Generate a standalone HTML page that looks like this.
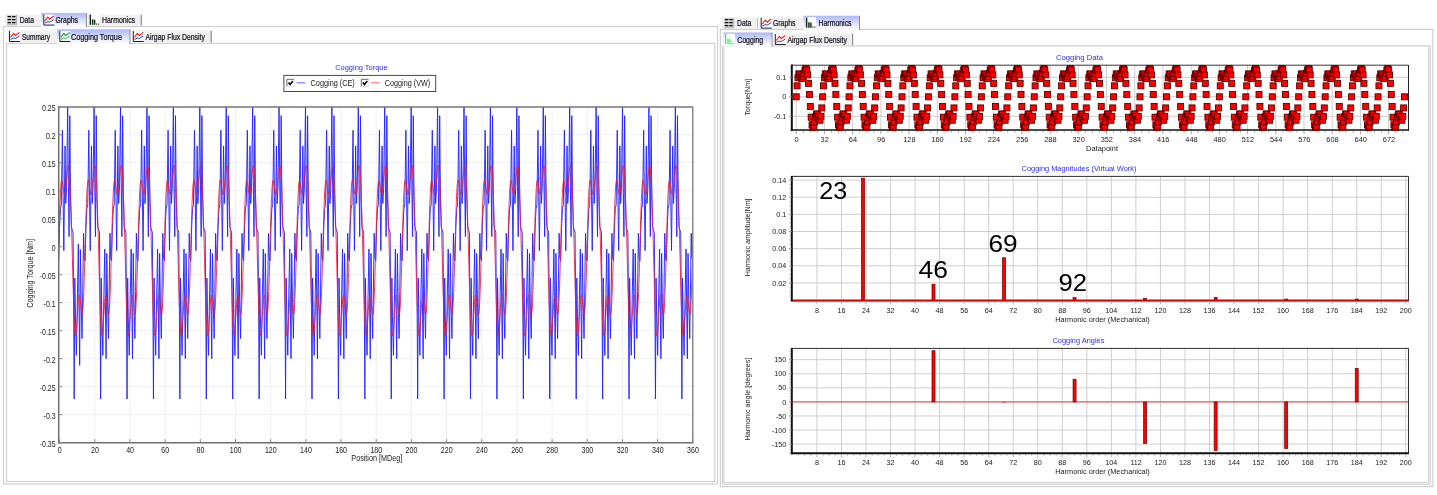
<!DOCTYPE html>
<html><head><meta charset="utf-8"><title>Cogging Torque</title>
<style>html,body{margin:0;padding:0;background:#fff;overflow:hidden}svg{display:block;filter:blur(0.3px)}text{font-family:'Liberation Sans',sans-serif}</style></head><body>
<svg width="1437" height="495" viewBox="0 0 1437 495">
<defs><linearGradient id="selg" x1="0" y1="0" x2="0" y2="1"><stop offset="0" stop-color="#aab6fb"/><stop offset="0.55" stop-color="#dfe3fd"/><stop offset="1" stop-color="#ffffff"/></linearGradient></defs>
<rect x="0" y="0" width="1437" height="495" fill="#ffffff" stroke="none" stroke-width="1"/>
<rect x="3.5" y="26.5" width="714" height="457.5" fill="none" stroke="#cfcfcf" stroke-width="1.2"/>
<rect x="6.5" y="43.3" width="708.2" height="438.2" fill="none" stroke="#cfcfcf" stroke-width="1.2"/>
<rect x="4" y="14.3" width="37.3" height="11.3" fill="#f0f0f0" stroke="none" stroke-width="1"/>
<line x1="4.4" y1="14.3" x2="4.4" y2="25.6" stroke="#fbfbfb" stroke-width="1"/>
<line x1="4" y1="14.700000000000001" x2="41.3" y2="14.700000000000001" stroke="#f8f8f8" stroke-width="1"/>
<rect x="7" y="14.8" width="9.5" height="10" fill="#e4e4e4" stroke="none" stroke-width="1"/>
<path d="M16.5 14.8 V24.8 H7" fill="none" stroke="#b0b0b0" stroke-width="1"/>
<line x1="7.5" y1="16.6" x2="11.2" y2="16.6" stroke="#101010" stroke-width="1.4"/>
<line x1="12.0" y1="16.6" x2="15.6" y2="16.6" stroke="#101010" stroke-width="1.4"/>
<line x1="7.5" y1="19.6" x2="11.2" y2="19.6" stroke="#101010" stroke-width="1.4"/>
<line x1="12.0" y1="19.6" x2="15.6" y2="19.6" stroke="#101010" stroke-width="1.4"/>
<line x1="7.5" y1="22.6" x2="11.2" y2="22.6" stroke="#101010" stroke-width="1.4"/>
<line x1="12.0" y1="22.6" x2="15.6" y2="22.6" stroke="#101010" stroke-width="1.4"/>
<text transform="translate(19.7 23.2) scale(0.8060 1)" font-size="8.4" fill="#101018" stroke="#101018" stroke-width="0.22">Data</text>
<rect x="41.3" y="13" width="45.400000000000006" height="14.2" fill="url(#selg)" stroke="none" stroke-width="1"/>
<line x1="86.4" y1="13" x2="86.4" y2="27.2" stroke="#8c8c8c" stroke-width="1"/>
<line x1="41.3" y1="13.2" x2="86.7" y2="13.2" stroke="#c4c8e8" stroke-width="0.6"/>
<rect x="43.3" y="14.6" width="11" height="11" fill="#ffffff" stroke="none" stroke-width="1"/>
<path d="M43.8 14.6 V25.1 H54.3" fill="none" stroke="#202020" stroke-width="1"/>
<polyline points="44.8,21.1 47.8,17.1 49.8,19.1 53.8,16.1" fill="none" stroke="#ff2020" stroke-width="1.2"/>
<polyline points="44.8,23.1 47.8,21.6 49.8,22.1 53.8,19.6" fill="none" stroke="#3040c0" stroke-width="1"/>
<text transform="translate(55.5 23.2) scale(0.8169 1)" font-size="8.4" fill="#101018" stroke="#101018" stroke-width="0.22">Graphs</text>
<rect x="87.3" y="14.3" width="54.39999999999999" height="11.3" fill="#f0f0f0" stroke="none" stroke-width="1"/>
<line x1="87.7" y1="14.3" x2="87.7" y2="25.6" stroke="#fbfbfb" stroke-width="1"/>
<line x1="87.3" y1="14.700000000000001" x2="141.7" y2="14.700000000000001" stroke="#f8f8f8" stroke-width="1"/>
<line x1="141.29999999999998" y1="14.8" x2="141.29999999999998" y2="25.6" stroke="#8c8c8c" stroke-width="1.2"/>
<rect x="89" y="14.3" width="10.5" height="11" fill="#ffffff" stroke="none" stroke-width="1"/>
<line x1="90.3" y1="14.600000000000001" x2="90.3" y2="24.8" stroke="#143014" stroke-width="1.5"/>
<line x1="92.6" y1="19.3" x2="92.6" y2="24.8" stroke="#143014" stroke-width="1.5"/>
<line x1="94.6" y1="19.700000000000003" x2="94.6" y2="24.8" stroke="#143014" stroke-width="1.5"/>
<line x1="96.6" y1="23.5" x2="96.6" y2="24.8" stroke="#143014" stroke-width="1.0"/>
<line x1="98.5" y1="23.5" x2="98.5" y2="24.8" stroke="#143014" stroke-width="1.0"/>
<text transform="translate(102 23.0) scale(0.8246 1)" font-size="8.4" fill="#101018" stroke="#101018" stroke-width="0.22">Harmonics</text>
<rect x="6.8" y="30.3" width="50.400000000000006" height="12.3" fill="#f0f0f0" stroke="none" stroke-width="1"/>
<line x1="7.2" y1="30.3" x2="7.2" y2="42.6" stroke="#fbfbfb" stroke-width="1"/>
<line x1="6.8" y1="30.7" x2="57.2" y2="30.7" stroke="#f8f8f8" stroke-width="1"/>
<rect x="9" y="31" width="11" height="11" fill="#ffffff" stroke="none" stroke-width="1"/>
<path d="M9.5 31 V41.5 H20" fill="none" stroke="#202020" stroke-width="1"/>
<polyline points="10.5,37.5 13.5,33.5 15.5,35.5 19.5,32.5" fill="none" stroke="#ff2020" stroke-width="1.2"/>
<polyline points="10.5,39.5 13.5,38 15.5,38.5 19.5,36" fill="none" stroke="#3040c0" stroke-width="1"/>
<text transform="translate(22 39.6) scale(0.7792 1)" font-size="8.4" fill="#101018" stroke="#101018" stroke-width="0.22">Summary</text>
<rect x="57.2" y="29.4" width="73.10000000000001" height="14.600000000000001" fill="url(#selg)" stroke="none" stroke-width="1"/>
<line x1="130.0" y1="29.4" x2="130.0" y2="44" stroke="#8c8c8c" stroke-width="1"/>
<line x1="57.2" y1="29.599999999999998" x2="130.3" y2="29.599999999999998" stroke="#c4c8e8" stroke-width="0.6"/>
<rect x="59.3" y="31" width="11" height="11" fill="#ffffff" stroke="none" stroke-width="1"/>
<path d="M59.8 31 V41.5 H70.3" fill="none" stroke="#202020" stroke-width="1"/>
<polyline points="60.8,37.5 63.8,33.5 65.8,35.5 69.8,32.5" fill="none" stroke="#18b038" stroke-width="1.2"/>
<polyline points="60.8,39.5 63.8,38 65.8,38.5 69.8,36" fill="none" stroke="#30b050" stroke-width="1"/>
<text transform="translate(71 39.6) scale(0.8622 1)" font-size="8.4" fill="#101018" stroke="#101018" stroke-width="0.22">Cogging Torque</text>
<rect x="131" y="30.3" width="80.6" height="12.3" fill="#f0f0f0" stroke="none" stroke-width="1"/>
<line x1="131.4" y1="30.3" x2="131.4" y2="42.6" stroke="#fbfbfb" stroke-width="1"/>
<line x1="131" y1="30.7" x2="211.6" y2="30.7" stroke="#f8f8f8" stroke-width="1"/>
<line x1="211.2" y1="30.8" x2="211.2" y2="42.6" stroke="#8c8c8c" stroke-width="1.2"/>
<rect x="132.8" y="31" width="11" height="11" fill="#ffffff" stroke="none" stroke-width="1"/>
<path d="M133.3 31 V41.5 H143.8" fill="none" stroke="#202020" stroke-width="1"/>
<polyline points="134.3,37.5 137.3,33.5 139.3,35.5 143.3,32.5" fill="none" stroke="#ff2020" stroke-width="1.2"/>
<polyline points="134.3,39.5 137.3,38 139.3,38.5 143.3,36" fill="none" stroke="#3040c0" stroke-width="1"/>
<text transform="translate(145.5 39.6) scale(0.8170 1)" font-size="8.4" fill="#101018" stroke="#101018" stroke-width="0.22">Airgap Flux Density</text>
<line x1="94.78" y1="106.7" x2="94.78" y2="442.7" stroke="#f0f0f0" stroke-width="1"/>
<line x1="129.96" y1="106.7" x2="129.96" y2="442.7" stroke="#f0f0f0" stroke-width="1"/>
<line x1="165.14" y1="106.7" x2="165.14" y2="442.7" stroke="#f0f0f0" stroke-width="1"/>
<line x1="200.32" y1="106.7" x2="200.32" y2="442.7" stroke="#f0f0f0" stroke-width="1"/>
<line x1="235.5" y1="106.7" x2="235.5" y2="442.7" stroke="#f0f0f0" stroke-width="1"/>
<line x1="270.68" y1="106.7" x2="270.68" y2="442.7" stroke="#f0f0f0" stroke-width="1"/>
<line x1="305.86" y1="106.7" x2="305.86" y2="442.7" stroke="#f0f0f0" stroke-width="1"/>
<line x1="341.04" y1="106.7" x2="341.04" y2="442.7" stroke="#f0f0f0" stroke-width="1"/>
<line x1="376.22" y1="106.7" x2="376.22" y2="442.7" stroke="#f0f0f0" stroke-width="1"/>
<line x1="411.4" y1="106.7" x2="411.4" y2="442.7" stroke="#f0f0f0" stroke-width="1"/>
<line x1="446.58" y1="106.7" x2="446.58" y2="442.7" stroke="#f0f0f0" stroke-width="1"/>
<line x1="481.76" y1="106.7" x2="481.76" y2="442.7" stroke="#f0f0f0" stroke-width="1"/>
<line x1="516.94" y1="106.7" x2="516.94" y2="442.7" stroke="#f0f0f0" stroke-width="1"/>
<line x1="552.12" y1="106.7" x2="552.12" y2="442.7" stroke="#f0f0f0" stroke-width="1"/>
<line x1="587.3" y1="106.7" x2="587.3" y2="442.7" stroke="#f0f0f0" stroke-width="1"/>
<line x1="622.48" y1="106.7" x2="622.48" y2="442.7" stroke="#f0f0f0" stroke-width="1"/>
<line x1="657.66" y1="106.7" x2="657.66" y2="442.7" stroke="#f0f0f0" stroke-width="1"/>
<line x1="58.7" y1="414.7" x2="692.8" y2="414.7" stroke="#f0f0f0" stroke-width="1"/>
<line x1="58.7" y1="386.7" x2="692.8" y2="386.7" stroke="#f0f0f0" stroke-width="1"/>
<line x1="58.7" y1="358.7" x2="692.8" y2="358.7" stroke="#f0f0f0" stroke-width="1"/>
<line x1="58.7" y1="330.7" x2="692.8" y2="330.7" stroke="#f0f0f0" stroke-width="1"/>
<line x1="58.7" y1="302.7" x2="692.8" y2="302.7" stroke="#f0f0f0" stroke-width="1"/>
<line x1="58.7" y1="274.7" x2="692.8" y2="274.7" stroke="#f0f0f0" stroke-width="1"/>
<line x1="58.7" y1="246.7" x2="692.8" y2="246.7" stroke="#f0f0f0" stroke-width="1"/>
<line x1="58.7" y1="218.7" x2="692.8" y2="218.7" stroke="#f0f0f0" stroke-width="1"/>
<line x1="58.7" y1="190.7" x2="692.8" y2="190.7" stroke="#f0f0f0" stroke-width="1"/>
<line x1="58.7" y1="162.7" x2="692.8" y2="162.7" stroke="#f0f0f0" stroke-width="1"/>
<line x1="58.7" y1="134.7" x2="692.8" y2="134.7" stroke="#f0f0f0" stroke-width="1"/>
<g clip-path="url(#lclip)">
<clipPath id="lclip"><rect x="58.7" y="106.7" width="634.0999999999999" height="336.0"/></clipPath>
<polyline fill="none" stroke="#2222ff" stroke-width="0.92" stroke-linejoin="miter" points="58.70,260.70 59.58,227.10 60.46,208.62 61.34,204.70 62.40,130.22 63.10,196.30 63.81,250.62 65.04,145.90 65.75,203.58 66.63,187.90 67.68,106.70 68.39,185.10 69.09,236.62 69.80,115.66 70.59,199.10 71.29,226.54 72.17,229.90 73.06,232.14 73.67,308.30 74.20,399.02 74.82,278.06 75.43,316.70 76.40,355.34 77.19,308.30 78.34,243.90 78.96,302.70 79.66,365.42 80.37,249.50 81.16,302.70 82.04,338.54 82.74,291.50 83.54,233.26 84.24,257.90 85.12,260.70 86.00,227.10 86.88,208.62 87.76,204.70 88.82,130.22 89.52,196.30 90.23,250.62 91.46,145.90 92.17,203.58 93.05,187.90 94.10,106.70 94.81,185.10 95.51,236.62 96.22,115.66 97.01,199.10 97.71,226.54 98.60,229.90 99.48,232.14 100.09,308.30 100.62,399.02 101.24,278.06 101.85,316.70 102.82,355.34 103.62,308.30 104.76,248.94 105.38,302.70 106.08,358.70 106.79,253.42 107.58,302.70 108.46,338.54 109.16,291.50 109.96,233.26 110.66,257.90 111.54,260.70 112.42,227.10 113.30,208.62 114.18,204.70 115.24,130.22 115.95,196.30 116.65,250.62 117.88,145.90 118.59,203.58 119.47,187.90 120.52,106.70 121.23,185.10 121.93,236.62 122.64,115.66 123.43,199.10 124.14,226.54 125.02,229.90 125.90,232.14 126.51,308.30 127.04,399.02 127.66,278.06 128.27,316.70 129.24,355.34 130.04,308.30 131.18,248.94 131.80,302.70 132.50,358.70 133.21,253.42 134.00,302.70 134.88,338.54 135.58,291.50 136.38,233.26 137.08,257.90 137.96,260.70 138.84,227.10 139.72,208.62 140.60,204.70 141.66,130.22 142.37,196.30 143.07,250.62 144.30,145.90 145.01,203.58 145.89,187.90 146.95,106.70 147.65,185.10 148.35,236.62 149.06,115.66 149.85,199.10 150.56,226.54 151.44,229.90 152.32,232.14 152.93,308.30 153.46,399.02 154.08,278.06 154.70,316.70 155.66,355.34 156.46,308.30 157.60,248.94 158.22,302.70 158.92,358.70 159.63,253.42 160.42,302.70 161.30,338.54 162.01,291.50 162.80,233.26 163.50,257.90 164.38,260.70 165.26,227.10 166.14,208.62 167.03,204.70 168.08,130.22 168.79,196.30 169.49,250.62 170.72,145.90 171.43,203.58 172.31,187.90 173.37,106.70 174.07,185.10 174.78,236.62 175.48,115.66 176.27,199.10 176.98,226.54 177.86,229.90 178.74,232.14 179.36,308.30 179.88,399.02 180.50,278.06 181.12,316.70 182.09,355.34 182.88,308.30 184.02,248.94 184.64,302.70 185.34,358.70 186.05,253.42 186.84,302.70 187.72,338.54 188.43,291.50 189.22,233.26 189.92,257.90 190.80,260.70 191.68,227.10 192.57,208.62 193.45,204.70 194.50,130.22 195.21,196.30 195.91,250.62 197.15,145.90 197.85,203.58 198.73,187.90 199.79,106.70 200.49,185.10 201.20,236.62 201.90,115.66 202.69,199.10 203.40,226.54 204.28,229.90 205.16,232.14 205.78,308.30 206.30,399.02 206.92,278.06 207.54,316.70 208.51,355.34 209.30,308.30 210.44,248.94 211.06,302.70 211.76,358.70 212.47,253.42 213.26,302.70 214.14,338.54 214.85,291.50 215.64,233.26 216.34,257.90 217.22,260.70 218.11,227.10 218.99,208.62 219.87,204.70 220.92,130.22 221.63,196.30 222.33,250.62 223.57,145.90 224.27,203.58 225.15,187.90 226.21,106.70 226.91,185.10 227.62,236.62 228.32,115.66 229.11,199.10 229.82,226.54 230.70,229.90 231.58,232.14 232.20,308.30 232.73,399.02 233.34,278.06 233.96,316.70 234.93,355.34 235.72,308.30 236.86,248.94 237.48,302.70 238.19,358.70 238.89,253.42 239.68,302.70 240.56,338.54 241.27,291.50 242.06,233.26 242.77,257.90 243.65,260.70 244.53,227.10 245.41,208.62 246.29,204.70 247.34,130.22 248.05,196.30 248.75,250.62 249.99,145.90 250.69,203.58 251.57,187.90 252.63,106.70 253.33,185.10 254.04,236.62 254.74,115.66 255.54,199.10 256.24,226.54 257.12,229.90 258.00,232.14 258.62,308.30 259.15,399.02 259.76,278.06 260.38,316.70 261.35,355.34 262.14,308.30 263.29,248.94 263.90,302.70 264.61,358.70 265.31,253.42 266.10,302.70 266.98,338.54 267.69,291.50 268.48,233.26 269.19,257.90 270.07,260.70 270.95,227.10 271.83,208.62 272.71,204.70 273.77,130.22 274.47,196.30 275.17,250.62 276.41,145.90 277.11,203.58 277.99,187.90 279.05,106.70 279.75,185.10 280.46,236.62 281.16,115.66 281.96,199.10 282.66,226.54 283.54,229.90 284.42,232.14 285.04,308.30 285.57,399.02 286.18,278.06 286.80,316.70 287.77,355.34 288.56,308.30 289.71,248.94 290.32,302.70 291.03,358.70 291.73,253.42 292.52,302.70 293.41,338.54 294.11,291.50 294.90,233.26 295.61,257.90 296.49,260.70 297.37,227.10 298.25,208.62 299.13,204.70 300.19,130.22 300.89,196.30 301.60,250.62 302.83,145.90 303.53,203.58 304.41,187.90 305.47,106.70 306.18,185.10 306.88,236.62 307.58,115.66 308.38,199.10 309.08,226.54 309.96,229.90 310.84,232.14 311.46,308.30 311.99,399.02 312.60,278.06 313.22,316.70 314.19,355.34 314.98,308.30 316.13,248.94 316.74,302.70 317.45,358.70 318.15,253.42 318.95,302.70 319.83,338.54 320.53,291.50 321.32,233.26 322.03,257.90 322.91,260.70 323.79,227.10 324.67,208.62 325.55,204.70 326.61,130.22 327.31,196.30 328.02,250.62 329.25,145.90 329.95,203.58 330.83,187.90 331.89,106.70 332.60,185.10 333.30,236.62 334.01,115.66 334.80,199.10 335.50,226.54 336.38,229.90 337.26,232.14 337.88,308.30 338.41,399.02 339.03,278.06 339.64,316.70 340.61,355.34 341.40,308.30 342.55,248.94 343.16,302.70 343.87,358.70 344.57,253.42 345.37,302.70 346.25,338.54 346.95,291.50 347.74,233.26 348.45,257.90 349.33,260.70 350.21,227.10 351.09,208.62 351.97,204.70 353.03,130.22 353.73,196.30 354.44,250.62 355.67,145.90 356.37,203.58 357.26,187.90 358.31,106.70 359.02,185.10 359.72,236.62 360.43,115.66 361.22,199.10 361.92,226.54 362.80,229.90 363.68,232.14 364.30,308.30 364.83,399.02 365.45,278.06 366.06,316.70 367.03,355.34 367.82,308.30 368.97,248.94 369.59,302.70 370.29,358.70 370.99,253.42 371.79,302.70 372.67,338.54 373.37,291.50 374.16,233.26 374.87,257.90 375.75,260.70 376.63,227.10 377.51,208.62 378.39,204.70 379.45,130.22 380.15,196.30 380.86,250.62 382.09,145.90 382.80,203.58 383.68,187.90 384.73,106.70 385.44,185.10 386.14,236.62 386.85,115.66 387.64,199.10 388.34,226.54 389.22,229.90 390.11,232.14 390.72,308.30 391.25,399.02 391.87,278.06 392.48,316.70 393.45,355.34 394.24,308.30 395.39,248.94 396.01,302.70 396.71,358.70 397.42,253.42 398.21,302.70 399.09,338.54 399.79,291.50 400.59,233.26 401.29,257.90 402.17,260.70 403.05,227.10 403.93,208.62 404.81,204.70 405.87,130.22 406.57,196.30 407.28,250.62 408.51,145.90 409.22,203.58 410.10,187.90 411.15,106.70 411.86,185.10 412.56,236.62 413.27,115.66 414.06,199.10 414.76,226.54 415.65,229.90 416.53,232.14 417.14,308.30 417.67,399.02 418.29,278.06 418.90,316.70 419.87,355.34 420.67,308.30 421.81,248.94 422.43,302.70 423.13,358.70 423.84,253.42 424.63,302.70 425.51,338.54 426.21,291.50 427.01,233.26 427.71,257.90 428.59,260.70 429.47,227.10 430.35,208.62 431.23,204.70 432.29,130.22 433.00,196.30 433.70,250.62 434.93,145.90 435.64,203.58 436.52,187.90 437.57,106.70 438.28,185.10 438.98,236.62 439.69,115.66 440.48,199.10 441.19,226.54 442.07,229.90 442.95,232.14 443.56,308.30 444.09,399.02 444.71,278.06 445.32,316.70 446.29,355.34 447.09,308.30 448.23,248.94 448.85,302.70 449.55,358.70 450.26,253.42 451.05,302.70 451.93,338.54 452.63,291.50 453.43,233.26 454.13,257.90 455.01,260.70 455.89,227.10 456.77,208.62 457.65,204.70 458.71,130.22 459.42,196.30 460.12,250.62 461.35,145.90 462.06,203.58 462.94,187.90 464.00,106.70 464.70,185.10 465.40,236.62 466.11,115.66 466.90,199.10 467.61,226.54 468.49,229.90 469.37,232.14 469.98,308.30 470.51,399.02 471.13,278.06 471.75,316.70 472.71,355.34 473.51,308.30 474.65,248.94 475.27,302.70 475.97,358.70 476.68,253.42 477.47,302.70 478.35,338.54 479.06,291.50 479.85,233.26 480.55,257.90 481.43,260.70 482.31,227.10 483.19,208.62 484.08,204.70 485.13,130.22 485.84,196.30 486.54,250.62 487.77,145.90 488.48,203.58 489.36,187.90 490.42,106.70 491.12,185.10 491.83,236.62 492.53,115.66 493.32,199.10 494.03,226.54 494.91,229.90 495.79,232.14 496.41,308.30 496.93,399.02 497.55,278.06 498.17,316.70 499.14,355.34 499.93,308.30 501.07,248.94 501.69,302.70 502.39,358.70 503.10,253.42 503.89,302.70 504.77,338.54 505.48,291.50 506.27,233.26 506.97,257.90 507.85,260.70 508.73,227.10 509.62,208.62 510.50,204.70 511.55,130.22 512.26,196.30 512.96,250.62 514.20,145.90 514.90,203.58 515.78,187.90 516.84,106.70 517.54,185.10 518.25,236.62 518.95,115.66 519.74,199.10 520.45,226.54 521.33,229.90 522.21,232.14 522.83,308.30 523.35,399.02 523.97,278.06 524.59,316.70 525.56,355.34 526.35,308.30 527.49,248.94 528.11,302.70 528.81,358.70 529.52,253.42 530.31,302.70 531.19,338.54 531.90,291.50 532.69,233.26 533.39,257.90 534.27,260.70 535.16,227.10 536.04,208.62 536.92,204.70 537.97,130.22 538.68,196.30 539.38,250.62 540.62,145.90 541.32,203.58 542.20,187.90 543.26,106.70 543.96,185.10 544.67,236.62 545.37,115.66 546.16,199.10 546.87,226.54 547.75,229.90 548.63,232.14 549.25,308.30 549.78,399.02 550.39,278.06 551.01,316.70 551.98,355.34 552.77,308.30 553.91,248.94 554.53,302.70 555.24,358.70 555.94,253.42 556.73,302.70 557.61,338.54 558.32,291.50 559.11,233.26 559.82,257.90 560.70,260.70 561.58,227.10 562.46,208.62 563.34,204.70 564.39,130.22 565.10,196.30 565.80,250.62 567.04,145.90 567.74,203.58 568.62,187.90 569.68,106.70 570.38,185.10 571.09,236.62 571.79,115.66 572.59,199.10 573.29,226.54 574.17,229.90 575.05,232.14 575.67,308.30 576.20,399.02 576.81,278.06 577.43,316.70 578.40,355.34 579.19,308.30 580.34,248.94 580.95,302.70 581.66,358.70 582.36,253.42 583.15,302.70 584.03,338.54 584.74,291.50 585.53,233.26 586.24,257.90 587.12,260.70 588.00,227.10 588.88,208.62 589.76,204.70 590.82,130.22 591.52,196.30 592.22,250.62 593.46,145.90 594.16,203.58 595.04,187.90 596.10,106.70 596.80,185.10 597.51,236.62 598.21,115.66 599.01,199.10 599.71,226.54 600.59,229.90 601.47,232.14 602.09,308.30 602.62,399.02 603.23,278.06 603.85,316.70 604.82,355.34 605.61,308.30 606.76,248.94 607.37,302.70 608.08,358.70 608.78,253.42 609.57,302.70 610.46,338.54 611.16,291.50 611.95,233.26 612.66,257.90 613.54,260.70 614.42,227.10 615.30,208.62 616.18,204.70 617.24,130.22 617.94,196.30 618.65,250.62 619.88,145.90 620.58,203.58 621.46,187.90 622.52,106.70 623.23,185.10 623.93,236.62 624.63,115.66 625.43,199.10 626.13,226.54 627.01,229.90 627.89,232.14 628.51,308.30 629.04,399.02 629.65,278.06 630.27,316.70 631.24,355.34 632.03,308.30 633.18,248.94 633.79,302.70 634.50,358.70 635.20,253.42 636.00,302.70 636.88,338.54 637.58,291.50 638.37,233.26 639.08,257.90 639.96,260.70 640.84,227.10 641.72,208.62 642.60,204.70 643.66,130.22 644.36,196.30 645.07,250.62 646.30,145.90 647.00,203.58 647.88,187.90 648.94,106.70 649.65,185.10 650.35,236.62 651.06,115.66 651.85,199.10 652.55,226.54 653.43,229.90 654.31,232.14 654.93,308.30 655.46,399.02 656.08,278.06 656.69,316.70 657.66,355.34 658.45,308.30 659.60,248.94 660.21,302.70 660.92,358.70 661.62,253.42 662.42,302.70 663.30,338.54 664.00,291.50 664.79,233.26 665.50,257.90 666.38,260.70 667.26,227.10 668.14,208.62 669.02,204.70 670.08,130.22 670.78,196.30 671.49,250.62 672.72,145.90 673.42,203.58 674.31,187.90 675.36,106.70 676.07,185.10 676.77,236.62 677.48,115.66 678.27,199.10 678.97,226.54 679.85,229.90 680.73,232.14 681.35,308.30 681.88,399.02 682.50,278.06 683.11,316.70 684.08,355.34 684.87,308.30 686.02,248.94 686.64,302.70 687.34,358.70 688.04,253.42 688.84,302.70 689.72,338.54 690.42,291.50 691.21,233.26 691.92,257.90 692.80,260.70"/>
<polyline fill="none" stroke="#f01c38" stroke-width="0.85" stroke-linejoin="round" points="58.70,246.70 59.14,230.38 59.58,215.26 60.02,202.28 60.46,192.10 60.90,185.06 61.34,181.17 61.78,180.12 62.22,181.33 62.66,184.05 63.10,187.45 63.54,190.75 63.98,193.24 64.42,194.43 64.86,194.04 65.31,192.04 65.75,188.62 66.19,184.13 66.63,179.10 67.07,174.11 67.51,169.77 67.95,166.65 68.39,165.28 68.83,166.07 69.27,169.31 69.71,175.17 70.15,183.69 70.59,194.74 71.03,208.08 71.47,223.30 71.91,239.87 72.35,257.12 72.79,274.30 73.23,290.63 73.67,305.31 74.11,317.63 74.55,326.99 74.99,333.03 75.43,335.62 75.87,334.92 76.31,331.36 76.75,325.63 77.19,318.61 77.63,311.25 78.08,304.52 78.52,299.23 78.96,295.98 79.40,295.06 79.84,296.42 80.28,299.65 80.72,304.04 81.16,308.67 81.60,312.50 82.04,314.53 82.48,313.91 82.92,310.06 83.36,302.74 83.80,292.10 84.24,278.63 84.68,263.16 85.12,246.70 85.56,230.38 86.00,215.26 86.44,202.28 86.88,192.10 87.32,185.06 87.76,181.17 88.20,180.12 88.64,181.33 89.08,184.05 89.52,187.45 89.96,190.75 90.41,193.24 90.85,194.43 91.29,194.04 91.73,192.04 92.17,188.62 92.61,184.13 93.05,179.10 93.49,174.11 93.93,169.77 94.37,166.65 94.81,165.28 95.25,166.07 95.69,169.31 96.13,175.17 96.57,183.69 97.01,194.74 97.45,208.08 97.89,223.30 98.33,239.87 98.77,257.12 99.21,274.30 99.65,290.63 100.09,305.31 100.53,317.63 100.97,326.99 101.41,333.03 101.85,335.62 102.29,334.92 102.73,331.36 103.18,325.63 103.62,318.61 104.06,311.25 104.50,304.52 104.94,299.23 105.38,295.98 105.82,295.06 106.26,296.42 106.70,299.65 107.14,304.04 107.58,308.67 108.02,312.50 108.46,314.53 108.90,313.91 109.34,310.06 109.78,302.74 110.22,292.10 110.66,278.63 111.10,263.16 111.54,246.70 111.98,230.38 112.42,215.26 112.86,202.28 113.30,192.10 113.74,185.06 114.18,181.17 114.62,180.12 115.06,181.33 115.50,184.05 115.95,187.45 116.39,190.75 116.83,193.24 117.27,194.43 117.71,194.04 118.15,192.04 118.59,188.62 119.03,184.13 119.47,179.10 119.91,174.11 120.35,169.77 120.79,166.65 121.23,165.28 121.67,166.07 122.11,169.31 122.55,175.17 122.99,183.69 123.43,194.74 123.87,208.08 124.31,223.30 124.75,239.87 125.19,257.12 125.63,274.30 126.07,290.63 126.51,305.31 126.95,317.63 127.39,326.99 127.83,333.03 128.27,335.62 128.72,334.92 129.16,331.36 129.60,325.63 130.04,318.61 130.48,311.25 130.92,304.52 131.36,299.23 131.80,295.98 132.24,295.06 132.68,296.42 133.12,299.65 133.56,304.04 134.00,308.67 134.44,312.50 134.88,314.53 135.32,313.91 135.76,310.06 136.20,302.74 136.64,292.10 137.08,278.63 137.52,263.16 137.96,246.70 138.40,230.38 138.84,215.26 139.28,202.28 139.72,192.10 140.16,185.06 140.60,181.17 141.04,180.12 141.49,181.33 141.93,184.05 142.37,187.45 142.81,190.75 143.25,193.24 143.69,194.43 144.13,194.04 144.57,192.04 145.01,188.62 145.45,184.13 145.89,179.10 146.33,174.11 146.77,169.77 147.21,166.65 147.65,165.28 148.09,166.07 148.53,169.31 148.97,175.17 149.41,183.69 149.85,194.74 150.29,208.08 150.73,223.30 151.17,239.87 151.61,257.12 152.05,274.30 152.49,290.63 152.93,305.31 153.37,317.63 153.81,326.99 154.26,333.03 154.70,335.62 155.14,334.92 155.58,331.36 156.02,325.63 156.46,318.61 156.90,311.25 157.34,304.52 157.78,299.23 158.22,295.98 158.66,295.06 159.10,296.42 159.54,299.65 159.98,304.04 160.42,308.67 160.86,312.50 161.30,314.53 161.74,313.91 162.18,310.06 162.62,302.74 163.06,292.10 163.50,278.63 163.94,263.16 164.38,246.70 164.82,230.38 165.26,215.26 165.70,202.28 166.14,192.10 166.59,185.06 167.03,181.17 167.47,180.12 167.91,181.33 168.35,184.05 168.79,187.45 169.23,190.75 169.67,193.24 170.11,194.43 170.55,194.04 170.99,192.04 171.43,188.62 171.87,184.13 172.31,179.10 172.75,174.11 173.19,169.77 173.63,166.65 174.07,165.28 174.51,166.07 174.95,169.31 175.39,175.17 175.83,183.69 176.27,194.74 176.71,208.08 177.15,223.30 177.59,239.87 178.03,257.12 178.47,274.30 178.91,290.63 179.36,305.31 179.80,317.63 180.24,326.99 180.68,333.03 181.12,335.62 181.56,334.92 182.00,331.36 182.44,325.63 182.88,318.61 183.32,311.25 183.76,304.52 184.20,299.23 184.64,295.98 185.08,295.06 185.52,296.42 185.96,299.65 186.40,304.04 186.84,308.67 187.28,312.50 187.72,314.53 188.16,313.91 188.60,310.06 189.04,302.74 189.48,292.10 189.92,278.63 190.36,263.16 190.80,246.70 191.24,230.38 191.68,215.26 192.13,202.28 192.57,192.10 193.01,185.06 193.45,181.17 193.89,180.12 194.33,181.33 194.77,184.05 195.21,187.45 195.65,190.75 196.09,193.24 196.53,194.43 196.97,194.04 197.41,192.04 197.85,188.62 198.29,184.13 198.73,179.10 199.17,174.11 199.61,169.77 200.05,166.65 200.49,165.28 200.93,166.07 201.37,169.31 201.81,175.17 202.25,183.69 202.69,194.74 203.13,208.08 203.57,223.30 204.01,239.87 204.45,257.12 204.90,274.30 205.34,290.63 205.78,305.31 206.22,317.63 206.66,326.99 207.10,333.03 207.54,335.62 207.98,334.92 208.42,331.36 208.86,325.63 209.30,318.61 209.74,311.25 210.18,304.52 210.62,299.23 211.06,295.98 211.50,295.06 211.94,296.42 212.38,299.65 212.82,304.04 213.26,308.67 213.70,312.50 214.14,314.53 214.58,313.91 215.02,310.06 215.46,302.74 215.90,292.10 216.34,278.63 216.78,263.16 217.22,246.70 217.67,230.38 218.11,215.26 218.55,202.28 218.99,192.10 219.43,185.06 219.87,181.17 220.31,180.12 220.75,181.33 221.19,184.05 221.63,187.45 222.07,190.75 222.51,193.24 222.95,194.43 223.39,194.04 223.83,192.04 224.27,188.62 224.71,184.13 225.15,179.10 225.59,174.11 226.03,169.77 226.47,166.65 226.91,165.28 227.35,166.07 227.79,169.31 228.23,175.17 228.67,183.69 229.11,194.74 229.55,208.08 230.00,223.30 230.44,239.87 230.88,257.12 231.32,274.30 231.76,290.63 232.20,305.31 232.64,317.63 233.08,326.99 233.52,333.03 233.96,335.62 234.40,334.92 234.84,331.36 235.28,325.63 235.72,318.61 236.16,311.25 236.60,304.52 237.04,299.23 237.48,295.98 237.92,295.06 238.36,296.42 238.80,299.65 239.24,304.04 239.68,308.67 240.12,312.50 240.56,314.53 241.00,313.91 241.44,310.06 241.88,302.74 242.32,292.10 242.77,278.63 243.21,263.16 243.65,246.70 244.09,230.38 244.53,215.26 244.97,202.28 245.41,192.10 245.85,185.06 246.29,181.17 246.73,180.12 247.17,181.33 247.61,184.05 248.05,187.45 248.49,190.75 248.93,193.24 249.37,194.43 249.81,194.04 250.25,192.04 250.69,188.62 251.13,184.13 251.57,179.10 252.01,174.11 252.45,169.77 252.89,166.65 253.33,165.28 253.77,166.07 254.21,169.31 254.65,175.17 255.09,183.69 255.54,194.74 255.98,208.08 256.42,223.30 256.86,239.87 257.30,257.12 257.74,274.30 258.18,290.63 258.62,305.31 259.06,317.63 259.50,326.99 259.94,333.03 260.38,335.62 260.82,334.92 261.26,331.36 261.70,325.63 262.14,318.61 262.58,311.25 263.02,304.52 263.46,299.23 263.90,295.98 264.34,295.06 264.78,296.42 265.22,299.65 265.66,304.04 266.10,308.67 266.54,312.50 266.98,314.53 267.42,313.91 267.86,310.06 268.31,302.74 268.75,292.10 269.19,278.63 269.63,263.16 270.07,246.70 270.51,230.38 270.95,215.26 271.39,202.28 271.83,192.10 272.27,185.06 272.71,181.17 273.15,180.12 273.59,181.33 274.03,184.05 274.47,187.45 274.91,190.75 275.35,193.24 275.79,194.43 276.23,194.04 276.67,192.04 277.11,188.62 277.55,184.13 277.99,179.10 278.43,174.11 278.87,169.77 279.31,166.65 279.75,165.28 280.19,166.07 280.63,169.31 281.08,175.17 281.52,183.69 281.96,194.74 282.40,208.08 282.84,223.30 283.28,239.87 283.72,257.12 284.16,274.30 284.60,290.63 285.04,305.31 285.48,317.63 285.92,326.99 286.36,333.03 286.80,335.62 287.24,334.92 287.68,331.36 288.12,325.63 288.56,318.61 289.00,311.25 289.44,304.52 289.88,299.23 290.32,295.98 290.76,295.06 291.20,296.42 291.64,299.65 292.08,304.04 292.52,308.67 292.96,312.50 293.41,314.53 293.85,313.91 294.29,310.06 294.73,302.74 295.17,292.10 295.61,278.63 296.05,263.16 296.49,246.70 296.93,230.38 297.37,215.26 297.81,202.28 298.25,192.10 298.69,185.06 299.13,181.17 299.57,180.12 300.01,181.33 300.45,184.05 300.89,187.45 301.33,190.75 301.77,193.24 302.21,194.43 302.65,194.04 303.09,192.04 303.53,188.62 303.97,184.13 304.41,179.10 304.85,174.11 305.29,169.77 305.73,166.65 306.18,165.28 306.62,166.07 307.06,169.31 307.50,175.17 307.94,183.69 308.38,194.74 308.82,208.08 309.26,223.30 309.70,239.87 310.14,257.12 310.58,274.30 311.02,290.63 311.46,305.31 311.90,317.63 312.34,326.99 312.78,333.03 313.22,335.62 313.66,334.92 314.10,331.36 314.54,325.63 314.98,318.61 315.42,311.25 315.86,304.52 316.30,299.23 316.74,295.98 317.18,295.06 317.62,296.42 318.06,299.65 318.50,304.04 318.95,308.67 319.39,312.50 319.83,314.53 320.27,313.91 320.71,310.06 321.15,302.74 321.59,292.10 322.03,278.63 322.47,263.16 322.91,246.70 323.35,230.38 323.79,215.26 324.23,202.28 324.67,192.10 325.11,185.06 325.55,181.17 325.99,180.12 326.43,181.33 326.87,184.05 327.31,187.45 327.75,190.75 328.19,193.24 328.63,194.43 329.07,194.04 329.51,192.04 329.95,188.62 330.39,184.13 330.83,179.10 331.27,174.11 331.72,169.77 332.16,166.65 332.60,165.28 333.04,166.07 333.48,169.31 333.92,175.17 334.36,183.69 334.80,194.74 335.24,208.08 335.68,223.30 336.12,239.87 336.56,257.12 337.00,274.30 337.44,290.63 337.88,305.31 338.32,317.63 338.76,326.99 339.20,333.03 339.64,335.62 340.08,334.92 340.52,331.36 340.96,325.63 341.40,318.61 341.84,311.25 342.28,304.52 342.72,299.23 343.16,295.98 343.60,295.06 344.04,296.42 344.49,299.65 344.93,304.04 345.37,308.67 345.81,312.50 346.25,314.53 346.69,313.91 347.13,310.06 347.57,302.74 348.01,292.10 348.45,278.63 348.89,263.16 349.33,246.70 349.77,230.38 350.21,215.26 350.65,202.28 351.09,192.10 351.53,185.06 351.97,181.17 352.41,180.12 352.85,181.33 353.29,184.05 353.73,187.45 354.17,190.75 354.61,193.24 355.05,194.43 355.49,194.04 355.93,192.04 356.37,188.62 356.82,184.13 357.26,179.10 357.70,174.11 358.14,169.77 358.58,166.65 359.02,165.28 359.46,166.07 359.90,169.31 360.34,175.17 360.78,183.69 361.22,194.74 361.66,208.08 362.10,223.30 362.54,239.87 362.98,257.12 363.42,274.30 363.86,290.63 364.30,305.31 364.74,317.63 365.18,326.99 365.62,333.03 366.06,335.62 366.50,334.92 366.94,331.36 367.38,325.63 367.82,318.61 368.26,311.25 368.70,304.52 369.14,299.23 369.59,295.98 370.03,295.06 370.47,296.42 370.91,299.65 371.35,304.04 371.79,308.67 372.23,312.50 372.67,314.53 373.11,313.91 373.55,310.06 373.99,302.74 374.43,292.10 374.87,278.63 375.31,263.16 375.75,246.70 376.19,230.38 376.63,215.26 377.07,202.28 377.51,192.10 377.95,185.06 378.39,181.17 378.83,180.12 379.27,181.33 379.71,184.05 380.15,187.45 380.59,190.75 381.03,193.24 381.47,194.43 381.91,194.04 382.36,192.04 382.80,188.62 383.24,184.13 383.68,179.10 384.12,174.11 384.56,169.77 385.00,166.65 385.44,165.28 385.88,166.07 386.32,169.31 386.76,175.17 387.20,183.69 387.64,194.74 388.08,208.08 388.52,223.30 388.96,239.87 389.40,257.12 389.84,274.30 390.28,290.63 390.72,305.31 391.16,317.63 391.60,326.99 392.04,333.03 392.48,335.62 392.92,334.92 393.36,331.36 393.80,325.63 394.24,318.61 394.68,311.25 395.13,304.52 395.57,299.23 396.01,295.98 396.45,295.06 396.89,296.42 397.33,299.65 397.77,304.04 398.21,308.67 398.65,312.50 399.09,314.53 399.53,313.91 399.97,310.06 400.41,302.74 400.85,292.10 401.29,278.63 401.73,263.16 402.17,246.70 402.61,230.38 403.05,215.26 403.49,202.28 403.93,192.10 404.37,185.06 404.81,181.17 405.25,180.12 405.69,181.33 406.13,184.05 406.57,187.45 407.01,190.75 407.45,193.24 407.90,194.43 408.34,194.04 408.78,192.04 409.22,188.62 409.66,184.13 410.10,179.10 410.54,174.11 410.98,169.77 411.42,166.65 411.86,165.28 412.30,166.07 412.74,169.31 413.18,175.17 413.62,183.69 414.06,194.74 414.50,208.08 414.94,223.30 415.38,239.87 415.82,257.12 416.26,274.30 416.70,290.63 417.14,305.31 417.58,317.63 418.02,326.99 418.46,333.03 418.90,335.62 419.34,334.92 419.78,331.36 420.23,325.63 420.67,318.61 421.11,311.25 421.55,304.52 421.99,299.23 422.43,295.98 422.87,295.06 423.31,296.42 423.75,299.65 424.19,304.04 424.63,308.67 425.07,312.50 425.51,314.53 425.95,313.91 426.39,310.06 426.83,302.74 427.27,292.10 427.71,278.63 428.15,263.16 428.59,246.70 429.03,230.38 429.47,215.26 429.91,202.28 430.35,192.10 430.79,185.06 431.23,181.17 431.67,180.12 432.11,181.33 432.55,184.05 433.00,187.45 433.44,190.75 433.88,193.24 434.32,194.43 434.76,194.04 435.20,192.04 435.64,188.62 436.08,184.13 436.52,179.10 436.96,174.11 437.40,169.77 437.84,166.65 438.28,165.28 438.72,166.07 439.16,169.31 439.60,175.17 440.04,183.69 440.48,194.74 440.92,208.08 441.36,223.30 441.80,239.87 442.24,257.12 442.68,274.30 443.12,290.63 443.56,305.31 444.00,317.63 444.44,326.99 444.88,333.03 445.32,335.62 445.77,334.92 446.21,331.36 446.65,325.63 447.09,318.61 447.53,311.25 447.97,304.52 448.41,299.23 448.85,295.98 449.29,295.06 449.73,296.42 450.17,299.65 450.61,304.04 451.05,308.67 451.49,312.50 451.93,314.53 452.37,313.91 452.81,310.06 453.25,302.74 453.69,292.10 454.13,278.63 454.57,263.16 455.01,246.70 455.45,230.38 455.89,215.26 456.33,202.28 456.77,192.10 457.21,185.06 457.65,181.17 458.09,180.12 458.54,181.33 458.98,184.05 459.42,187.45 459.86,190.75 460.30,193.24 460.74,194.43 461.18,194.04 461.62,192.04 462.06,188.62 462.50,184.13 462.94,179.10 463.38,174.11 463.82,169.77 464.26,166.65 464.70,165.28 465.14,166.07 465.58,169.31 466.02,175.17 466.46,183.69 466.90,194.74 467.34,208.08 467.78,223.30 468.22,239.87 468.66,257.12 469.10,274.30 469.54,290.63 469.98,305.31 470.42,317.63 470.86,326.99 471.31,333.03 471.75,335.62 472.19,334.92 472.63,331.36 473.07,325.63 473.51,318.61 473.95,311.25 474.39,304.52 474.83,299.23 475.27,295.98 475.71,295.06 476.15,296.42 476.59,299.65 477.03,304.04 477.47,308.67 477.91,312.50 478.35,314.53 478.79,313.91 479.23,310.06 479.67,302.74 480.11,292.10 480.55,278.63 480.99,263.16 481.43,246.70 481.87,230.38 482.31,215.26 482.75,202.28 483.19,192.10 483.64,185.06 484.08,181.17 484.52,180.12 484.96,181.33 485.40,184.05 485.84,187.45 486.28,190.75 486.72,193.24 487.16,194.43 487.60,194.04 488.04,192.04 488.48,188.62 488.92,184.13 489.36,179.10 489.80,174.11 490.24,169.77 490.68,166.65 491.12,165.28 491.56,166.07 492.00,169.31 492.44,175.17 492.88,183.69 493.32,194.74 493.76,208.08 494.20,223.30 494.64,239.87 495.08,257.12 495.52,274.30 495.96,290.63 496.41,305.31 496.85,317.63 497.29,326.99 497.73,333.03 498.17,335.62 498.61,334.92 499.05,331.36 499.49,325.63 499.93,318.61 500.37,311.25 500.81,304.52 501.25,299.23 501.69,295.98 502.13,295.06 502.57,296.42 503.01,299.65 503.45,304.04 503.89,308.67 504.33,312.50 504.77,314.53 505.21,313.91 505.65,310.06 506.09,302.74 506.53,292.10 506.97,278.63 507.41,263.16 507.85,246.70 508.29,230.38 508.73,215.26 509.18,202.28 509.62,192.10 510.06,185.06 510.50,181.17 510.94,180.12 511.38,181.33 511.82,184.05 512.26,187.45 512.70,190.75 513.14,193.24 513.58,194.43 514.02,194.04 514.46,192.04 514.90,188.62 515.34,184.13 515.78,179.10 516.22,174.11 516.66,169.77 517.10,166.65 517.54,165.28 517.98,166.07 518.42,169.31 518.86,175.17 519.30,183.69 519.74,194.74 520.18,208.08 520.62,223.30 521.06,239.87 521.50,257.12 521.95,274.30 522.39,290.63 522.83,305.31 523.27,317.63 523.71,326.99 524.15,333.03 524.59,335.62 525.03,334.92 525.47,331.36 525.91,325.63 526.35,318.61 526.79,311.25 527.23,304.52 527.67,299.23 528.11,295.98 528.55,295.06 528.99,296.42 529.43,299.65 529.87,304.04 530.31,308.67 530.75,312.50 531.19,314.53 531.63,313.91 532.07,310.06 532.51,302.74 532.95,292.10 533.39,278.63 533.83,263.16 534.27,246.70 534.72,230.38 535.16,215.26 535.60,202.28 536.04,192.10 536.48,185.06 536.92,181.17 537.36,180.12 537.80,181.33 538.24,184.05 538.68,187.45 539.12,190.75 539.56,193.24 540.00,194.43 540.44,194.04 540.88,192.04 541.32,188.62 541.76,184.13 542.20,179.10 542.64,174.11 543.08,169.77 543.52,166.65 543.96,165.28 544.40,166.07 544.84,169.31 545.28,175.17 545.72,183.69 546.16,194.74 546.60,208.08 547.05,223.30 547.49,239.87 547.93,257.12 548.37,274.30 548.81,290.63 549.25,305.31 549.69,317.63 550.13,326.99 550.57,333.03 551.01,335.62 551.45,334.92 551.89,331.36 552.33,325.63 552.77,318.61 553.21,311.25 553.65,304.52 554.09,299.23 554.53,295.98 554.97,295.06 555.41,296.42 555.85,299.65 556.29,304.04 556.73,308.67 557.17,312.50 557.61,314.53 558.05,313.91 558.49,310.06 558.93,302.74 559.37,292.10 559.82,278.63 560.26,263.16 560.70,246.70 561.14,230.38 561.58,215.26 562.02,202.28 562.46,192.10 562.90,185.06 563.34,181.17 563.78,180.12 564.22,181.33 564.66,184.05 565.10,187.45 565.54,190.75 565.98,193.24 566.42,194.43 566.86,194.04 567.30,192.04 567.74,188.62 568.18,184.13 568.62,179.10 569.06,174.11 569.50,169.77 569.94,166.65 570.38,165.28 570.82,166.07 571.26,169.31 571.70,175.17 572.14,183.69 572.59,194.74 573.03,208.08 573.47,223.30 573.91,239.87 574.35,257.12 574.79,274.30 575.23,290.63 575.67,305.31 576.11,317.63 576.55,326.99 576.99,333.03 577.43,335.62 577.87,334.92 578.31,331.36 578.75,325.63 579.19,318.61 579.63,311.25 580.07,304.52 580.51,299.23 580.95,295.98 581.39,295.06 581.83,296.42 582.27,299.65 582.71,304.04 583.15,308.67 583.59,312.50 584.03,314.53 584.47,313.91 584.91,310.06 585.36,302.74 585.80,292.10 586.24,278.63 586.68,263.16 587.12,246.70 587.56,230.38 588.00,215.26 588.44,202.28 588.88,192.10 589.32,185.06 589.76,181.17 590.20,180.12 590.64,181.33 591.08,184.05 591.52,187.45 591.96,190.75 592.40,193.24 592.84,194.43 593.28,194.04 593.72,192.04 594.16,188.62 594.60,184.13 595.04,179.10 595.48,174.11 595.92,169.77 596.36,166.65 596.80,165.28 597.24,166.07 597.68,169.31 598.13,175.17 598.57,183.69 599.01,194.74 599.45,208.08 599.89,223.30 600.33,239.87 600.77,257.12 601.21,274.30 601.65,290.63 602.09,305.31 602.53,317.63 602.97,326.99 603.41,333.03 603.85,335.62 604.29,334.92 604.73,331.36 605.17,325.63 605.61,318.61 606.05,311.25 606.49,304.52 606.93,299.23 607.37,295.98 607.81,295.06 608.25,296.42 608.69,299.65 609.13,304.04 609.57,308.67 610.01,312.50 610.46,314.53 610.90,313.91 611.34,310.06 611.78,302.74 612.22,292.10 612.66,278.63 613.10,263.16 613.54,246.70 613.98,230.38 614.42,215.26 614.86,202.28 615.30,192.10 615.74,185.06 616.18,181.17 616.62,180.12 617.06,181.33 617.50,184.05 617.94,187.45 618.38,190.75 618.82,193.24 619.26,194.43 619.70,194.04 620.14,192.04 620.58,188.62 621.02,184.13 621.46,179.10 621.90,174.11 622.34,169.77 622.78,166.65 623.23,165.28 623.67,166.07 624.11,169.31 624.55,175.17 624.99,183.69 625.43,194.74 625.87,208.08 626.31,223.30 626.75,239.87 627.19,257.12 627.63,274.30 628.07,290.63 628.51,305.31 628.95,317.63 629.39,326.99 629.83,333.03 630.27,335.62 630.71,334.92 631.15,331.36 631.59,325.63 632.03,318.61 632.47,311.25 632.91,304.52 633.35,299.23 633.79,295.98 634.23,295.06 634.67,296.42 635.11,299.65 635.55,304.04 636.00,308.67 636.44,312.50 636.88,314.53 637.32,313.91 637.76,310.06 638.20,302.74 638.64,292.10 639.08,278.63 639.52,263.16 639.96,246.70 640.40,230.38 640.84,215.26 641.28,202.28 641.72,192.10 642.16,185.06 642.60,181.17 643.04,180.12 643.48,181.33 643.92,184.05 644.36,187.45 644.80,190.75 645.24,193.24 645.68,194.43 646.12,194.04 646.56,192.04 647.00,188.62 647.44,184.13 647.88,179.10 648.32,174.11 648.77,169.77 649.21,166.65 649.65,165.28 650.09,166.07 650.53,169.31 650.97,175.17 651.41,183.69 651.85,194.74 652.29,208.08 652.73,223.30 653.17,239.87 653.61,257.12 654.05,274.30 654.49,290.63 654.93,305.31 655.37,317.63 655.81,326.99 656.25,333.03 656.69,335.62 657.13,334.92 657.57,331.36 658.01,325.63 658.45,318.61 658.89,311.25 659.33,304.52 659.77,299.23 660.21,295.98 660.65,295.06 661.10,296.42 661.54,299.65 661.98,304.04 662.42,308.67 662.86,312.50 663.30,314.53 663.74,313.91 664.18,310.06 664.62,302.74 665.06,292.10 665.50,278.63 665.94,263.16 666.38,246.70 666.82,230.38 667.26,215.26 667.70,202.28 668.14,192.10 668.58,185.06 669.02,181.17 669.46,180.12 669.90,181.33 670.34,184.05 670.78,187.45 671.22,190.75 671.66,193.24 672.10,194.43 672.54,194.04 672.98,192.04 673.42,188.62 673.87,184.13 674.31,179.10 674.75,174.11 675.19,169.77 675.63,166.65 676.07,165.28 676.51,166.07 676.95,169.31 677.39,175.17 677.83,183.69 678.27,194.74 678.71,208.08 679.15,223.30 679.59,239.87 680.03,257.12 680.47,274.30 680.91,290.63 681.35,305.31 681.79,317.63 682.23,326.99 682.67,333.03 683.11,335.62 683.55,334.92 683.99,331.36 684.43,325.63 684.87,318.61 685.31,311.25 685.75,304.52 686.19,299.23 686.64,295.98 687.08,295.06 687.52,296.42 687.96,299.65 688.40,304.04 688.84,308.67 689.28,312.50 689.72,314.53 690.16,313.91 690.60,310.06 691.04,302.74 691.48,292.10 691.92,278.63 692.36,263.16 692.80,246.70"/>
</g>
<line x1="58.7" y1="105.9" x2="58.7" y2="443.5" stroke="#6e6e6e" stroke-width="1.5"/>
<line x1="58.0" y1="442.7" x2="693.5" y2="442.7" stroke="#6e6e6e" stroke-width="1.5"/>
<line x1="58.7" y1="107.0" x2="692.8" y2="107.0" stroke="#767676" stroke-width="1.4"/>
<line x1="692.8" y1="106.7" x2="692.8" y2="442.7" stroke="#767676" stroke-width="1.3"/>
<line x1="59.6" y1="442.7" x2="59.6" y2="439.2" stroke="#8a8a8a" stroke-width="1"/>
<text transform="translate(59.7 452.5) scale(0.8400 1)" font-size="8.4" fill="#202020" text-anchor="middle">0</text>
<line x1="94.78" y1="442.7" x2="94.78" y2="439.2" stroke="#8a8a8a" stroke-width="1"/>
<text transform="translate(94.88 452.5) scale(0.8400 1)" font-size="8.4" fill="#202020" text-anchor="middle">20</text>
<line x1="129.96" y1="442.7" x2="129.96" y2="439.2" stroke="#8a8a8a" stroke-width="1"/>
<text transform="translate(130.06 452.5) scale(0.8400 1)" font-size="8.4" fill="#202020" text-anchor="middle">40</text>
<line x1="165.14" y1="442.7" x2="165.14" y2="439.2" stroke="#8a8a8a" stroke-width="1"/>
<text transform="translate(165.24 452.5) scale(0.8400 1)" font-size="8.4" fill="#202020" text-anchor="middle">60</text>
<line x1="200.32" y1="442.7" x2="200.32" y2="439.2" stroke="#8a8a8a" stroke-width="1"/>
<text transform="translate(200.42 452.5) scale(0.8400 1)" font-size="8.4" fill="#202020" text-anchor="middle">80</text>
<line x1="235.5" y1="442.7" x2="235.5" y2="439.2" stroke="#8a8a8a" stroke-width="1"/>
<text transform="translate(235.6 452.5) scale(0.8400 1)" font-size="8.4" fill="#202020" text-anchor="middle">100</text>
<line x1="270.68" y1="442.7" x2="270.68" y2="439.2" stroke="#8a8a8a" stroke-width="1"/>
<text transform="translate(270.78 452.5) scale(0.8400 1)" font-size="8.4" fill="#202020" text-anchor="middle">120</text>
<line x1="305.86" y1="442.7" x2="305.86" y2="439.2" stroke="#8a8a8a" stroke-width="1"/>
<text transform="translate(305.96 452.5) scale(0.8400 1)" font-size="8.4" fill="#202020" text-anchor="middle">140</text>
<line x1="341.04" y1="442.7" x2="341.04" y2="439.2" stroke="#8a8a8a" stroke-width="1"/>
<text transform="translate(341.14 452.5) scale(0.8400 1)" font-size="8.4" fill="#202020" text-anchor="middle">160</text>
<line x1="376.22" y1="442.7" x2="376.22" y2="439.2" stroke="#8a8a8a" stroke-width="1"/>
<text transform="translate(376.32 452.5) scale(0.8400 1)" font-size="8.4" fill="#202020" text-anchor="middle">180</text>
<line x1="411.4" y1="442.7" x2="411.4" y2="439.2" stroke="#8a8a8a" stroke-width="1"/>
<text transform="translate(411.5 452.5) scale(0.8400 1)" font-size="8.4" fill="#202020" text-anchor="middle">200</text>
<line x1="446.58" y1="442.7" x2="446.58" y2="439.2" stroke="#8a8a8a" stroke-width="1"/>
<text transform="translate(446.68 452.5) scale(0.8400 1)" font-size="8.4" fill="#202020" text-anchor="middle">220</text>
<line x1="481.76" y1="442.7" x2="481.76" y2="439.2" stroke="#8a8a8a" stroke-width="1"/>
<text transform="translate(481.86 452.5) scale(0.8400 1)" font-size="8.4" fill="#202020" text-anchor="middle">240</text>
<line x1="516.94" y1="442.7" x2="516.94" y2="439.2" stroke="#8a8a8a" stroke-width="1"/>
<text transform="translate(517.04 452.5) scale(0.8400 1)" font-size="8.4" fill="#202020" text-anchor="middle">260</text>
<line x1="552.12" y1="442.7" x2="552.12" y2="439.2" stroke="#8a8a8a" stroke-width="1"/>
<text transform="translate(552.22 452.5) scale(0.8400 1)" font-size="8.4" fill="#202020" text-anchor="middle">280</text>
<line x1="587.3" y1="442.7" x2="587.3" y2="439.2" stroke="#8a8a8a" stroke-width="1"/>
<text transform="translate(587.4 452.5) scale(0.8400 1)" font-size="8.4" fill="#202020" text-anchor="middle">300</text>
<line x1="622.48" y1="442.7" x2="622.48" y2="439.2" stroke="#8a8a8a" stroke-width="1"/>
<text transform="translate(622.58 452.5) scale(0.8400 1)" font-size="8.4" fill="#202020" text-anchor="middle">320</text>
<line x1="657.66" y1="442.7" x2="657.66" y2="439.2" stroke="#8a8a8a" stroke-width="1"/>
<text transform="translate(657.76 452.5) scale(0.8400 1)" font-size="8.4" fill="#202020" text-anchor="middle">340</text>
<line x1="692.84" y1="442.7" x2="692.84" y2="439.2" stroke="#8a8a8a" stroke-width="1"/>
<text transform="translate(692.94 452.5) scale(0.8400 1)" font-size="8.4" fill="#202020" text-anchor="middle">360</text>
<line x1="58.7" y1="442.7" x2="62.2" y2="442.7" stroke="#8a8a8a" stroke-width="1"/>
<text transform="translate(55.6 446.7) scale(0.8500 1)" font-size="8.2" fill="#202020" text-anchor="end">-0.35</text>
<line x1="58.7" y1="414.7" x2="62.2" y2="414.7" stroke="#8a8a8a" stroke-width="1"/>
<text transform="translate(55.6 418.7) scale(0.8500 1)" font-size="8.2" fill="#202020" text-anchor="end">-0.3</text>
<line x1="58.7" y1="386.7" x2="62.2" y2="386.7" stroke="#8a8a8a" stroke-width="1"/>
<text transform="translate(55.6 390.7) scale(0.8500 1)" font-size="8.2" fill="#202020" text-anchor="end">-0.25</text>
<line x1="58.7" y1="358.7" x2="62.2" y2="358.7" stroke="#8a8a8a" stroke-width="1"/>
<text transform="translate(55.6 362.7) scale(0.8500 1)" font-size="8.2" fill="#202020" text-anchor="end">-0.2</text>
<line x1="58.7" y1="330.7" x2="62.2" y2="330.7" stroke="#8a8a8a" stroke-width="1"/>
<text transform="translate(55.6 334.7) scale(0.8500 1)" font-size="8.2" fill="#202020" text-anchor="end">-0.15</text>
<line x1="58.7" y1="302.7" x2="62.2" y2="302.7" stroke="#8a8a8a" stroke-width="1"/>
<text transform="translate(55.6 306.7) scale(0.8500 1)" font-size="8.2" fill="#202020" text-anchor="end">-0.1</text>
<line x1="58.7" y1="274.7" x2="62.2" y2="274.7" stroke="#8a8a8a" stroke-width="1"/>
<text transform="translate(55.6 278.7) scale(0.8500 1)" font-size="8.2" fill="#202020" text-anchor="end">-0.05</text>
<line x1="58.7" y1="246.7" x2="62.2" y2="246.7" stroke="#8a8a8a" stroke-width="1"/>
<text transform="translate(55.6 250.7) scale(0.8500 1)" font-size="8.2" fill="#202020" text-anchor="end">0</text>
<line x1="58.7" y1="218.7" x2="62.2" y2="218.7" stroke="#8a8a8a" stroke-width="1"/>
<text transform="translate(55.6 222.7) scale(0.8500 1)" font-size="8.2" fill="#202020" text-anchor="end">0.05</text>
<line x1="58.7" y1="190.7" x2="62.2" y2="190.7" stroke="#8a8a8a" stroke-width="1"/>
<text transform="translate(55.6 194.7) scale(0.8500 1)" font-size="8.2" fill="#202020" text-anchor="end">0.1</text>
<line x1="58.7" y1="162.7" x2="62.2" y2="162.7" stroke="#8a8a8a" stroke-width="1"/>
<text transform="translate(55.6 166.7) scale(0.8500 1)" font-size="8.2" fill="#202020" text-anchor="end">0.15</text>
<line x1="58.7" y1="134.7" x2="62.2" y2="134.7" stroke="#8a8a8a" stroke-width="1"/>
<text transform="translate(55.6 138.7) scale(0.8500 1)" font-size="8.2" fill="#202020" text-anchor="end">0.2</text>
<line x1="58.7" y1="106.7" x2="62.2" y2="106.7" stroke="#8a8a8a" stroke-width="1"/>
<text transform="translate(55.6 110.7) scale(0.8500 1)" font-size="8.2" fill="#202020" text-anchor="end">0.25</text>
<text transform="translate(361.4 69.7) scale(0.9319 1)" font-size="8.0" fill="#2a2aff" text-anchor="middle">Cogging Torque</text>
<text transform="translate(376.8 460.7) scale(0.8602 1)" font-size="8.4" fill="#202020" text-anchor="middle">Position [MDeg]</text>
<text transform="translate(33.3 273.3) rotate(-90) scale(0.8710 1)" font-size="8.4" fill="#202020" text-anchor="middle">Cogging Torque [Nm]</text>
<rect x="283.9" y="75.4" width="151.8" height="16.1" fill="#ffffff" stroke="#4a4a4a" stroke-width="1"/>
<rect x="286.9" y="79.3" width="7.4" height="7.2" fill="#ffffff" stroke="none" stroke-width="1"/>
<path d="M286.9 86.5 V79.3 H294.29999999999995" fill="none" stroke="#6a6a6a" stroke-width="1"/>
<path d="M294.29999999999995 79.3 V86.5 H286.9" fill="none" stroke="#e0e0e0" stroke-width="1"/>
<path d="M288.5 82.5 L290.09999999999997 84.5 L292.9 81.1" fill="none" stroke="#000" stroke-width="1.5"/>
<line x1="296.5" y1="82.8" x2="305.4" y2="82.8" stroke="#7070ff" stroke-width="1.1"/>
<text transform="translate(310.6 85.8) scale(0.8686 1)" font-size="8.4" fill="#202020">Cogging (CE)</text>
<rect x="361.3" y="79.3" width="7.4" height="7.2" fill="#ffffff" stroke="none" stroke-width="1"/>
<path d="M361.3 86.5 V79.3 H368.7" fill="none" stroke="#6a6a6a" stroke-width="1"/>
<path d="M368.7 79.3 V86.5 H361.3" fill="none" stroke="#e0e0e0" stroke-width="1"/>
<path d="M362.90000000000003 82.5 L364.5 84.5 L367.3 81.1" fill="none" stroke="#000" stroke-width="1.5"/>
<line x1="371.1" y1="82.8" x2="379.7" y2="82.8" stroke="#ff7070" stroke-width="1.1"/>
<text transform="translate(384.7 85.8) scale(0.8645 1)" font-size="8.4" fill="#202020">Cogging (VW)</text>
<rect x="720.4" y="29.4" width="712.5" height="457.2" fill="none" stroke="#cfcfcf" stroke-width="1.2"/>
<rect x="722.6" y="45.9" width="707.6" height="438.3" fill="none" stroke="#cfcfcf" stroke-width="1.2"/>
<path d="M723.9 47.5 V482.4 H1428.5 V47.5" fill="none" stroke="#c4c4c4" stroke-width="0.8"/>
<rect x="721.5" y="17.3" width="36.5" height="11.3" fill="#f0f0f0" stroke="none" stroke-width="1"/>
<line x1="721.9" y1="17.3" x2="721.9" y2="28.6" stroke="#fbfbfb" stroke-width="1"/>
<line x1="721.5" y1="17.7" x2="758.0" y2="17.7" stroke="#f8f8f8" stroke-width="1"/>
<line x1="757.6" y1="17.8" x2="757.6" y2="28.6" stroke="#8c8c8c" stroke-width="1.2"/>
<rect x="724.2" y="17.8" width="9.5" height="10" fill="#e4e4e4" stroke="none" stroke-width="1"/>
<path d="M733.7 17.8 V27.8 H724.2" fill="none" stroke="#b0b0b0" stroke-width="1"/>
<line x1="724.7" y1="19.6" x2="728.4000000000001" y2="19.6" stroke="#101010" stroke-width="1.4"/>
<line x1="729.2" y1="19.6" x2="732.8000000000001" y2="19.6" stroke="#101010" stroke-width="1.4"/>
<line x1="724.7" y1="22.6" x2="728.4000000000001" y2="22.6" stroke="#101010" stroke-width="1.4"/>
<line x1="729.2" y1="22.6" x2="732.8000000000001" y2="22.6" stroke="#101010" stroke-width="1.4"/>
<line x1="724.7" y1="25.6" x2="728.4000000000001" y2="25.6" stroke="#101010" stroke-width="1.4"/>
<line x1="729.2" y1="25.6" x2="732.8000000000001" y2="25.6" stroke="#101010" stroke-width="1.4"/>
<text transform="translate(737 26.2) scale(0.8060 1)" font-size="8.4" fill="#101018" stroke="#101018" stroke-width="0.22">Data</text>
<rect x="757.8" y="17.3" width="45.700000000000045" height="11.3" fill="#f0f0f0" stroke="none" stroke-width="1"/>
<line x1="758.1999999999999" y1="17.3" x2="758.1999999999999" y2="28.6" stroke="#fbfbfb" stroke-width="1"/>
<line x1="757.8" y1="17.7" x2="803.5" y2="17.7" stroke="#f8f8f8" stroke-width="1"/>
<rect x="760.7" y="17.6" width="11" height="11" fill="#ffffff" stroke="none" stroke-width="1"/>
<path d="M761.2 17.6 V28.1 H771.7" fill="none" stroke="#202020" stroke-width="1"/>
<polyline points="762.2,24.1 765.2,20.1 767.2,22.1 771.2,19.1" fill="none" stroke="#ff2020" stroke-width="1.2"/>
<polyline points="762.2,26.1 765.2,24.6 767.2,25.1 771.2,22.6" fill="none" stroke="#3040c0" stroke-width="1"/>
<text transform="translate(773 26.2) scale(0.8169 1)" font-size="8.4" fill="#101018" stroke="#101018" stroke-width="0.22">Graphs</text>
<rect x="803.5" y="15.9" width="56.299999999999955" height="14.1" fill="url(#selg)" stroke="none" stroke-width="1"/>
<line x1="859.5" y1="15.9" x2="859.5" y2="30" stroke="#8c8c8c" stroke-width="1"/>
<line x1="803.5" y1="16.1" x2="859.8" y2="16.1" stroke="#c4c8e8" stroke-width="0.6"/>
<rect x="805.3" y="17.2" width="10.5" height="11" fill="#ffffff" stroke="none" stroke-width="1"/>
<line x1="806.5999999999999" y1="17.5" x2="806.5999999999999" y2="27.7" stroke="#143014" stroke-width="1.5"/>
<line x1="808.9" y1="22.2" x2="808.9" y2="27.7" stroke="#143014" stroke-width="1.5"/>
<line x1="810.9" y1="22.6" x2="810.9" y2="27.7" stroke="#143014" stroke-width="1.5"/>
<line x1="812.9" y1="26.4" x2="812.9" y2="27.7" stroke="#143014" stroke-width="1.0"/>
<line x1="814.8" y1="26.4" x2="814.8" y2="27.7" stroke="#143014" stroke-width="1.0"/>
<text transform="translate(818.5 26.0) scale(0.8246 1)" font-size="8.4" fill="#101018" stroke="#101018" stroke-width="0.22">Harmonics</text>
<rect x="723.4" y="32.6" width="49.0" height="13.799999999999997" fill="url(#selg)" stroke="none" stroke-width="1"/>
<line x1="772.1" y1="32.6" x2="772.1" y2="46.4" stroke="#8c8c8c" stroke-width="1"/>
<line x1="723.4" y1="32.800000000000004" x2="772.4" y2="32.800000000000004" stroke="#c4c8e8" stroke-width="0.6"/>
<rect x="724.4" y="33.8" width="10.5" height="11" fill="#ffffff" stroke="none" stroke-width="1"/>
<line x1="725.6999999999999" y1="34.099999999999994" x2="725.6999999999999" y2="44.3" stroke="#1ee640" stroke-width="1.1"/>
<line x1="728.0" y1="38.8" x2="728.0" y2="44.3" stroke="#1ee640" stroke-width="1.1"/>
<line x1="730.0" y1="39.199999999999996" x2="730.0" y2="44.3" stroke="#1ee640" stroke-width="1.1"/>
<line x1="732.0" y1="43.0" x2="732.0" y2="44.3" stroke="#1ee640" stroke-width="1.0"/>
<line x1="733.9" y1="43.0" x2="733.9" y2="44.3" stroke="#1ee640" stroke-width="1.0"/>
<text transform="translate(737.2 42.6) scale(0.8310 1)" font-size="8.4" fill="#101018" stroke="#101018" stroke-width="0.22">Cogging</text>
<rect x="773" y="33.3" width="80" height="11.900000000000006" fill="#f0f0f0" stroke="none" stroke-width="1"/>
<line x1="773.4" y1="33.3" x2="773.4" y2="45.2" stroke="#fbfbfb" stroke-width="1"/>
<line x1="773" y1="33.699999999999996" x2="853" y2="33.699999999999996" stroke="#f8f8f8" stroke-width="1"/>
<line x1="852.6" y1="33.8" x2="852.6" y2="45.2" stroke="#8c8c8c" stroke-width="1.2"/>
<rect x="774.8" y="34" width="11" height="11" fill="#ffffff" stroke="none" stroke-width="1"/>
<path d="M775.3 34 V44.5 H785.8" fill="none" stroke="#202020" stroke-width="1"/>
<polyline points="776.3,40.5 779.3,36.5 781.3,38.5 785.3,35.5" fill="none" stroke="#ff2020" stroke-width="1.2"/>
<polyline points="776.3,42.5 779.3,41 781.3,41.5 785.3,39" fill="none" stroke="#3040c0" stroke-width="1"/>
<text transform="translate(787.5 42.6) scale(0.8170 1)" font-size="8.4" fill="#101018" stroke="#101018" stroke-width="0.22">Airgap Flux Density</text>
<line x1="796.2" y1="65.0" x2="796.2" y2="130.0" stroke="#cecece" stroke-width="1"/>
<line x1="824.41" y1="65.0" x2="824.41" y2="130.0" stroke="#cecece" stroke-width="1"/>
<line x1="852.62" y1="65.0" x2="852.62" y2="130.0" stroke="#cecece" stroke-width="1"/>
<line x1="880.83" y1="65.0" x2="880.83" y2="130.0" stroke="#cecece" stroke-width="1"/>
<line x1="909.04" y1="65.0" x2="909.04" y2="130.0" stroke="#cecece" stroke-width="1"/>
<line x1="937.26" y1="65.0" x2="937.26" y2="130.0" stroke="#cecece" stroke-width="1"/>
<line x1="965.47" y1="65.0" x2="965.47" y2="130.0" stroke="#cecece" stroke-width="1"/>
<line x1="993.68" y1="65.0" x2="993.68" y2="130.0" stroke="#cecece" stroke-width="1"/>
<line x1="1021.89" y1="65.0" x2="1021.89" y2="130.0" stroke="#cecece" stroke-width="1"/>
<line x1="1050.1" y1="65.0" x2="1050.1" y2="130.0" stroke="#cecece" stroke-width="1"/>
<line x1="1078.31" y1="65.0" x2="1078.31" y2="130.0" stroke="#cecece" stroke-width="1"/>
<line x1="1106.52" y1="65.0" x2="1106.52" y2="130.0" stroke="#cecece" stroke-width="1"/>
<line x1="1134.73" y1="65.0" x2="1134.73" y2="130.0" stroke="#cecece" stroke-width="1"/>
<line x1="1162.95" y1="65.0" x2="1162.95" y2="130.0" stroke="#cecece" stroke-width="1"/>
<line x1="1191.16" y1="65.0" x2="1191.16" y2="130.0" stroke="#cecece" stroke-width="1"/>
<line x1="1219.37" y1="65.0" x2="1219.37" y2="130.0" stroke="#cecece" stroke-width="1"/>
<line x1="1247.58" y1="65.0" x2="1247.58" y2="130.0" stroke="#cecece" stroke-width="1"/>
<line x1="1275.79" y1="65.0" x2="1275.79" y2="130.0" stroke="#cecece" stroke-width="1"/>
<line x1="1304.0" y1="65.0" x2="1304.0" y2="130.0" stroke="#cecece" stroke-width="1"/>
<line x1="1332.21" y1="65.0" x2="1332.21" y2="130.0" stroke="#cecece" stroke-width="1"/>
<line x1="1360.42" y1="65.0" x2="1360.42" y2="130.0" stroke="#cecece" stroke-width="1"/>
<line x1="1388.64" y1="65.0" x2="1388.64" y2="130.0" stroke="#cecece" stroke-width="1"/>
<line x1="791.8" y1="116.3" x2="1408.5" y2="116.3" stroke="#cecece" stroke-width="1"/>
<line x1="791.8" y1="96.8" x2="1408.5" y2="96.8" stroke="#cecece" stroke-width="1"/>
<line x1="791.8" y1="77.3" x2="1408.5" y2="77.3" stroke="#cecece" stroke-width="1"/>
<line x1="791.8" y1="65.2" x2="1408.5" y2="65.2" stroke="#202020" stroke-width="0.9"/>
<line x1="1408.5" y1="65.0" x2="1408.5" y2="130.8" stroke="#202020" stroke-width="1"/>
<line x1="791.8" y1="64.5" x2="791.8" y2="130.8" stroke="#101010" stroke-width="2"/>
<line x1="790.8" y1="130.0" x2="1409.0" y2="130.0" stroke="#101010" stroke-width="1.7"/>
<clipPath id="p1clip"><rect x="791.8" y="65.0" width="616.7" height="65.9"/></clipPath>
<g clip-path="url(#p1clip)" fill="#ff0000" stroke="#5a0000" stroke-width="0.9">
<rect x="793.20" y="93.80" width="6" height="6"/>
<rect x="794.08" y="82.85" width="6" height="6"/>
<rect x="794.96" y="74.79" width="6" height="6"/>
<rect x="795.84" y="70.98" width="6" height="6"/>
<rect x="796.73" y="71.04" width="6" height="6"/>
<rect x="797.61" y="73.17" width="6" height="6"/>
<rect x="798.49" y="75.18" width="6" height="6"/>
<rect x="799.37" y="75.46" width="6" height="6"/>
<rect x="800.25" y="73.57" width="6" height="6"/>
<rect x="801.13" y="70.26" width="6" height="6"/>
<rect x="802.02" y="67.01" width="6" height="6"/>
<rect x="802.90" y="65.45" width="6" height="6"/>
<rect x="803.78" y="66.85" width="6" height="6"/>
<rect x="804.66" y="71.86" width="6" height="6"/>
<rect x="805.54" y="80.35" width="6" height="6"/>
<rect x="806.42" y="91.42" width="6" height="6"/>
<rect x="807.31" y="103.41" width="6" height="6"/>
<rect x="808.19" y="114.21" width="6" height="6"/>
<rect x="809.07" y="121.76" width="6" height="6"/>
<rect x="809.95" y="124.76" width="6" height="6"/>
<rect x="810.83" y="123.28" width="6" height="6"/>
<rect x="811.71" y="118.84" width="6" height="6"/>
<rect x="812.60" y="113.93" width="6" height="6"/>
<rect x="813.48" y="110.96" width="6" height="6"/>
<rect x="814.36" y="111.11" width="6" height="6"/>
<rect x="815.24" y="113.77" width="6" height="6"/>
<rect x="816.12" y="116.71" width="6" height="6"/>
<rect x="817.00" y="117.20" width="6" height="6"/>
<rect x="817.88" y="113.32" width="6" height="6"/>
<rect x="818.77" y="104.92" width="6" height="6"/>
<rect x="819.65" y="93.80" width="6" height="6"/>
<rect x="820.53" y="82.85" width="6" height="6"/>
<rect x="821.41" y="74.79" width="6" height="6"/>
<rect x="822.29" y="70.98" width="6" height="6"/>
<rect x="823.17" y="71.04" width="6" height="6"/>
<rect x="824.06" y="73.17" width="6" height="6"/>
<rect x="824.94" y="75.18" width="6" height="6"/>
<rect x="825.82" y="75.46" width="6" height="6"/>
<rect x="826.70" y="73.57" width="6" height="6"/>
<rect x="827.58" y="70.26" width="6" height="6"/>
<rect x="828.46" y="67.01" width="6" height="6"/>
<rect x="829.35" y="65.45" width="6" height="6"/>
<rect x="830.23" y="66.85" width="6" height="6"/>
<rect x="831.11" y="71.86" width="6" height="6"/>
<rect x="831.99" y="80.35" width="6" height="6"/>
<rect x="832.87" y="91.42" width="6" height="6"/>
<rect x="833.75" y="103.41" width="6" height="6"/>
<rect x="834.64" y="114.21" width="6" height="6"/>
<rect x="835.52" y="121.76" width="6" height="6"/>
<rect x="836.40" y="124.76" width="6" height="6"/>
<rect x="837.28" y="123.28" width="6" height="6"/>
<rect x="838.16" y="118.84" width="6" height="6"/>
<rect x="839.04" y="113.93" width="6" height="6"/>
<rect x="839.92" y="110.96" width="6" height="6"/>
<rect x="840.81" y="111.11" width="6" height="6"/>
<rect x="841.69" y="113.77" width="6" height="6"/>
<rect x="842.57" y="116.71" width="6" height="6"/>
<rect x="843.45" y="117.20" width="6" height="6"/>
<rect x="844.33" y="113.32" width="6" height="6"/>
<rect x="845.21" y="104.92" width="6" height="6"/>
<rect x="846.10" y="93.80" width="6" height="6"/>
<rect x="846.98" y="82.85" width="6" height="6"/>
<rect x="847.86" y="74.79" width="6" height="6"/>
<rect x="848.74" y="70.98" width="6" height="6"/>
<rect x="849.62" y="71.04" width="6" height="6"/>
<rect x="850.50" y="73.17" width="6" height="6"/>
<rect x="851.39" y="75.18" width="6" height="6"/>
<rect x="852.27" y="75.46" width="6" height="6"/>
<rect x="853.15" y="73.57" width="6" height="6"/>
<rect x="854.03" y="70.26" width="6" height="6"/>
<rect x="854.91" y="67.01" width="6" height="6"/>
<rect x="855.79" y="65.45" width="6" height="6"/>
<rect x="856.68" y="66.85" width="6" height="6"/>
<rect x="857.56" y="71.86" width="6" height="6"/>
<rect x="858.44" y="80.35" width="6" height="6"/>
<rect x="859.32" y="91.42" width="6" height="6"/>
<rect x="860.20" y="103.41" width="6" height="6"/>
<rect x="861.08" y="114.21" width="6" height="6"/>
<rect x="861.96" y="121.76" width="6" height="6"/>
<rect x="862.85" y="124.76" width="6" height="6"/>
<rect x="863.73" y="123.28" width="6" height="6"/>
<rect x="864.61" y="118.84" width="6" height="6"/>
<rect x="865.49" y="113.93" width="6" height="6"/>
<rect x="866.37" y="110.96" width="6" height="6"/>
<rect x="867.25" y="111.11" width="6" height="6"/>
<rect x="868.14" y="113.77" width="6" height="6"/>
<rect x="869.02" y="116.71" width="6" height="6"/>
<rect x="869.90" y="117.20" width="6" height="6"/>
<rect x="870.78" y="113.32" width="6" height="6"/>
<rect x="871.66" y="104.92" width="6" height="6"/>
<rect x="872.54" y="93.80" width="6" height="6"/>
<rect x="873.43" y="82.85" width="6" height="6"/>
<rect x="874.31" y="74.79" width="6" height="6"/>
<rect x="875.19" y="70.98" width="6" height="6"/>
<rect x="876.07" y="71.04" width="6" height="6"/>
<rect x="876.95" y="73.17" width="6" height="6"/>
<rect x="877.83" y="75.18" width="6" height="6"/>
<rect x="878.72" y="75.46" width="6" height="6"/>
<rect x="879.60" y="73.57" width="6" height="6"/>
<rect x="880.48" y="70.26" width="6" height="6"/>
<rect x="881.36" y="67.01" width="6" height="6"/>
<rect x="882.24" y="65.45" width="6" height="6"/>
<rect x="883.12" y="66.85" width="6" height="6"/>
<rect x="884.00" y="71.86" width="6" height="6"/>
<rect x="884.89" y="80.35" width="6" height="6"/>
<rect x="885.77" y="91.42" width="6" height="6"/>
<rect x="886.65" y="103.41" width="6" height="6"/>
<rect x="887.53" y="114.21" width="6" height="6"/>
<rect x="888.41" y="121.76" width="6" height="6"/>
<rect x="889.29" y="124.76" width="6" height="6"/>
<rect x="890.18" y="123.28" width="6" height="6"/>
<rect x="891.06" y="118.84" width="6" height="6"/>
<rect x="891.94" y="113.93" width="6" height="6"/>
<rect x="892.82" y="110.96" width="6" height="6"/>
<rect x="893.70" y="111.11" width="6" height="6"/>
<rect x="894.58" y="113.77" width="6" height="6"/>
<rect x="895.47" y="116.71" width="6" height="6"/>
<rect x="896.35" y="117.20" width="6" height="6"/>
<rect x="897.23" y="113.32" width="6" height="6"/>
<rect x="898.11" y="104.92" width="6" height="6"/>
<rect x="898.99" y="93.80" width="6" height="6"/>
<rect x="899.87" y="82.85" width="6" height="6"/>
<rect x="900.76" y="74.79" width="6" height="6"/>
<rect x="901.64" y="70.98" width="6" height="6"/>
<rect x="902.52" y="71.04" width="6" height="6"/>
<rect x="903.40" y="73.17" width="6" height="6"/>
<rect x="904.28" y="75.18" width="6" height="6"/>
<rect x="905.16" y="75.46" width="6" height="6"/>
<rect x="906.04" y="73.57" width="6" height="6"/>
<rect x="906.93" y="70.26" width="6" height="6"/>
<rect x="907.81" y="67.01" width="6" height="6"/>
<rect x="908.69" y="65.45" width="6" height="6"/>
<rect x="909.57" y="66.85" width="6" height="6"/>
<rect x="910.45" y="71.86" width="6" height="6"/>
<rect x="911.33" y="80.35" width="6" height="6"/>
<rect x="912.22" y="91.42" width="6" height="6"/>
<rect x="913.10" y="103.41" width="6" height="6"/>
<rect x="913.98" y="114.21" width="6" height="6"/>
<rect x="914.86" y="121.76" width="6" height="6"/>
<rect x="915.74" y="124.76" width="6" height="6"/>
<rect x="916.62" y="123.28" width="6" height="6"/>
<rect x="917.51" y="118.84" width="6" height="6"/>
<rect x="918.39" y="113.93" width="6" height="6"/>
<rect x="919.27" y="110.96" width="6" height="6"/>
<rect x="920.15" y="111.11" width="6" height="6"/>
<rect x="921.03" y="113.77" width="6" height="6"/>
<rect x="921.91" y="116.71" width="6" height="6"/>
<rect x="922.80" y="117.20" width="6" height="6"/>
<rect x="923.68" y="113.32" width="6" height="6"/>
<rect x="924.56" y="104.92" width="6" height="6"/>
<rect x="925.44" y="93.80" width="6" height="6"/>
<rect x="926.32" y="82.85" width="6" height="6"/>
<rect x="927.20" y="74.79" width="6" height="6"/>
<rect x="928.08" y="70.98" width="6" height="6"/>
<rect x="928.97" y="71.04" width="6" height="6"/>
<rect x="929.85" y="73.17" width="6" height="6"/>
<rect x="930.73" y="75.18" width="6" height="6"/>
<rect x="931.61" y="75.46" width="6" height="6"/>
<rect x="932.49" y="73.57" width="6" height="6"/>
<rect x="933.37" y="70.26" width="6" height="6"/>
<rect x="934.26" y="67.01" width="6" height="6"/>
<rect x="935.14" y="65.45" width="6" height="6"/>
<rect x="936.02" y="66.85" width="6" height="6"/>
<rect x="936.90" y="71.86" width="6" height="6"/>
<rect x="937.78" y="80.35" width="6" height="6"/>
<rect x="938.66" y="91.42" width="6" height="6"/>
<rect x="939.55" y="103.41" width="6" height="6"/>
<rect x="940.43" y="114.21" width="6" height="6"/>
<rect x="941.31" y="121.76" width="6" height="6"/>
<rect x="942.19" y="124.76" width="6" height="6"/>
<rect x="943.07" y="123.28" width="6" height="6"/>
<rect x="943.95" y="118.84" width="6" height="6"/>
<rect x="944.84" y="113.93" width="6" height="6"/>
<rect x="945.72" y="110.96" width="6" height="6"/>
<rect x="946.60" y="111.11" width="6" height="6"/>
<rect x="947.48" y="113.77" width="6" height="6"/>
<rect x="948.36" y="116.71" width="6" height="6"/>
<rect x="949.24" y="117.20" width="6" height="6"/>
<rect x="950.12" y="113.32" width="6" height="6"/>
<rect x="951.01" y="104.92" width="6" height="6"/>
<rect x="951.89" y="93.80" width="6" height="6"/>
<rect x="952.77" y="82.85" width="6" height="6"/>
<rect x="953.65" y="74.79" width="6" height="6"/>
<rect x="954.53" y="70.98" width="6" height="6"/>
<rect x="955.41" y="71.04" width="6" height="6"/>
<rect x="956.30" y="73.17" width="6" height="6"/>
<rect x="957.18" y="75.18" width="6" height="6"/>
<rect x="958.06" y="75.46" width="6" height="6"/>
<rect x="958.94" y="73.57" width="6" height="6"/>
<rect x="959.82" y="70.26" width="6" height="6"/>
<rect x="960.70" y="67.01" width="6" height="6"/>
<rect x="961.59" y="65.45" width="6" height="6"/>
<rect x="962.47" y="66.85" width="6" height="6"/>
<rect x="963.35" y="71.86" width="6" height="6"/>
<rect x="964.23" y="80.35" width="6" height="6"/>
<rect x="965.11" y="91.42" width="6" height="6"/>
<rect x="965.99" y="103.41" width="6" height="6"/>
<rect x="966.88" y="114.21" width="6" height="6"/>
<rect x="967.76" y="121.76" width="6" height="6"/>
<rect x="968.64" y="124.76" width="6" height="6"/>
<rect x="969.52" y="123.28" width="6" height="6"/>
<rect x="970.40" y="118.84" width="6" height="6"/>
<rect x="971.28" y="113.93" width="6" height="6"/>
<rect x="972.16" y="110.96" width="6" height="6"/>
<rect x="973.05" y="111.11" width="6" height="6"/>
<rect x="973.93" y="113.77" width="6" height="6"/>
<rect x="974.81" y="116.71" width="6" height="6"/>
<rect x="975.69" y="117.20" width="6" height="6"/>
<rect x="976.57" y="113.32" width="6" height="6"/>
<rect x="977.45" y="104.92" width="6" height="6"/>
<rect x="978.34" y="93.80" width="6" height="6"/>
<rect x="979.22" y="82.85" width="6" height="6"/>
<rect x="980.10" y="74.79" width="6" height="6"/>
<rect x="980.98" y="70.98" width="6" height="6"/>
<rect x="981.86" y="71.04" width="6" height="6"/>
<rect x="982.74" y="73.17" width="6" height="6"/>
<rect x="983.63" y="75.18" width="6" height="6"/>
<rect x="984.51" y="75.46" width="6" height="6"/>
<rect x="985.39" y="73.57" width="6" height="6"/>
<rect x="986.27" y="70.26" width="6" height="6"/>
<rect x="987.15" y="67.01" width="6" height="6"/>
<rect x="988.03" y="65.45" width="6" height="6"/>
<rect x="988.92" y="66.85" width="6" height="6"/>
<rect x="989.80" y="71.86" width="6" height="6"/>
<rect x="990.68" y="80.35" width="6" height="6"/>
<rect x="991.56" y="91.42" width="6" height="6"/>
<rect x="992.44" y="103.41" width="6" height="6"/>
<rect x="993.32" y="114.21" width="6" height="6"/>
<rect x="994.20" y="121.76" width="6" height="6"/>
<rect x="995.09" y="124.76" width="6" height="6"/>
<rect x="995.97" y="123.28" width="6" height="6"/>
<rect x="996.85" y="118.84" width="6" height="6"/>
<rect x="997.73" y="113.93" width="6" height="6"/>
<rect x="998.61" y="110.96" width="6" height="6"/>
<rect x="999.49" y="111.11" width="6" height="6"/>
<rect x="1000.38" y="113.77" width="6" height="6"/>
<rect x="1001.26" y="116.71" width="6" height="6"/>
<rect x="1002.14" y="117.20" width="6" height="6"/>
<rect x="1003.02" y="113.32" width="6" height="6"/>
<rect x="1003.90" y="104.92" width="6" height="6"/>
<rect x="1004.78" y="93.80" width="6" height="6"/>
<rect x="1005.67" y="82.85" width="6" height="6"/>
<rect x="1006.55" y="74.79" width="6" height="6"/>
<rect x="1007.43" y="70.98" width="6" height="6"/>
<rect x="1008.31" y="71.04" width="6" height="6"/>
<rect x="1009.19" y="73.17" width="6" height="6"/>
<rect x="1010.07" y="75.18" width="6" height="6"/>
<rect x="1010.96" y="75.46" width="6" height="6"/>
<rect x="1011.84" y="73.57" width="6" height="6"/>
<rect x="1012.72" y="70.26" width="6" height="6"/>
<rect x="1013.60" y="67.01" width="6" height="6"/>
<rect x="1014.48" y="65.45" width="6" height="6"/>
<rect x="1015.36" y="66.85" width="6" height="6"/>
<rect x="1016.24" y="71.86" width="6" height="6"/>
<rect x="1017.13" y="80.35" width="6" height="6"/>
<rect x="1018.01" y="91.42" width="6" height="6"/>
<rect x="1018.89" y="103.41" width="6" height="6"/>
<rect x="1019.77" y="114.21" width="6" height="6"/>
<rect x="1020.65" y="121.76" width="6" height="6"/>
<rect x="1021.53" y="124.76" width="6" height="6"/>
<rect x="1022.42" y="123.28" width="6" height="6"/>
<rect x="1023.30" y="118.84" width="6" height="6"/>
<rect x="1024.18" y="113.93" width="6" height="6"/>
<rect x="1025.06" y="110.96" width="6" height="6"/>
<rect x="1025.94" y="111.11" width="6" height="6"/>
<rect x="1026.82" y="113.77" width="6" height="6"/>
<rect x="1027.71" y="116.71" width="6" height="6"/>
<rect x="1028.59" y="117.20" width="6" height="6"/>
<rect x="1029.47" y="113.32" width="6" height="6"/>
<rect x="1030.35" y="104.92" width="6" height="6"/>
<rect x="1031.23" y="93.80" width="6" height="6"/>
<rect x="1032.11" y="82.85" width="6" height="6"/>
<rect x="1033.00" y="74.79" width="6" height="6"/>
<rect x="1033.88" y="70.98" width="6" height="6"/>
<rect x="1034.76" y="71.04" width="6" height="6"/>
<rect x="1035.64" y="73.17" width="6" height="6"/>
<rect x="1036.52" y="75.18" width="6" height="6"/>
<rect x="1037.40" y="75.46" width="6" height="6"/>
<rect x="1038.28" y="73.57" width="6" height="6"/>
<rect x="1039.17" y="70.26" width="6" height="6"/>
<rect x="1040.05" y="67.01" width="6" height="6"/>
<rect x="1040.93" y="65.45" width="6" height="6"/>
<rect x="1041.81" y="66.85" width="6" height="6"/>
<rect x="1042.69" y="71.86" width="6" height="6"/>
<rect x="1043.57" y="80.35" width="6" height="6"/>
<rect x="1044.46" y="91.42" width="6" height="6"/>
<rect x="1045.34" y="103.41" width="6" height="6"/>
<rect x="1046.22" y="114.21" width="6" height="6"/>
<rect x="1047.10" y="121.76" width="6" height="6"/>
<rect x="1047.98" y="124.76" width="6" height="6"/>
<rect x="1048.86" y="123.28" width="6" height="6"/>
<rect x="1049.75" y="118.84" width="6" height="6"/>
<rect x="1050.63" y="113.93" width="6" height="6"/>
<rect x="1051.51" y="110.96" width="6" height="6"/>
<rect x="1052.39" y="111.11" width="6" height="6"/>
<rect x="1053.27" y="113.77" width="6" height="6"/>
<rect x="1054.15" y="116.71" width="6" height="6"/>
<rect x="1055.04" y="117.20" width="6" height="6"/>
<rect x="1055.92" y="113.32" width="6" height="6"/>
<rect x="1056.80" y="104.92" width="6" height="6"/>
<rect x="1057.68" y="93.80" width="6" height="6"/>
<rect x="1058.56" y="82.85" width="6" height="6"/>
<rect x="1059.44" y="74.79" width="6" height="6"/>
<rect x="1060.32" y="70.98" width="6" height="6"/>
<rect x="1061.21" y="71.04" width="6" height="6"/>
<rect x="1062.09" y="73.17" width="6" height="6"/>
<rect x="1062.97" y="75.18" width="6" height="6"/>
<rect x="1063.85" y="75.46" width="6" height="6"/>
<rect x="1064.73" y="73.57" width="6" height="6"/>
<rect x="1065.61" y="70.26" width="6" height="6"/>
<rect x="1066.50" y="67.01" width="6" height="6"/>
<rect x="1067.38" y="65.45" width="6" height="6"/>
<rect x="1068.26" y="66.85" width="6" height="6"/>
<rect x="1069.14" y="71.86" width="6" height="6"/>
<rect x="1070.02" y="80.35" width="6" height="6"/>
<rect x="1070.90" y="91.42" width="6" height="6"/>
<rect x="1071.79" y="103.41" width="6" height="6"/>
<rect x="1072.67" y="114.21" width="6" height="6"/>
<rect x="1073.55" y="121.76" width="6" height="6"/>
<rect x="1074.43" y="124.76" width="6" height="6"/>
<rect x="1075.31" y="123.28" width="6" height="6"/>
<rect x="1076.19" y="118.84" width="6" height="6"/>
<rect x="1077.08" y="113.93" width="6" height="6"/>
<rect x="1077.96" y="110.96" width="6" height="6"/>
<rect x="1078.84" y="111.11" width="6" height="6"/>
<rect x="1079.72" y="113.77" width="6" height="6"/>
<rect x="1080.60" y="116.71" width="6" height="6"/>
<rect x="1081.48" y="117.20" width="6" height="6"/>
<rect x="1082.36" y="113.32" width="6" height="6"/>
<rect x="1083.25" y="104.92" width="6" height="6"/>
<rect x="1084.13" y="93.80" width="6" height="6"/>
<rect x="1085.01" y="82.85" width="6" height="6"/>
<rect x="1085.89" y="74.79" width="6" height="6"/>
<rect x="1086.77" y="70.98" width="6" height="6"/>
<rect x="1087.65" y="71.04" width="6" height="6"/>
<rect x="1088.54" y="73.17" width="6" height="6"/>
<rect x="1089.42" y="75.18" width="6" height="6"/>
<rect x="1090.30" y="75.46" width="6" height="6"/>
<rect x="1091.18" y="73.57" width="6" height="6"/>
<rect x="1092.06" y="70.26" width="6" height="6"/>
<rect x="1092.94" y="67.01" width="6" height="6"/>
<rect x="1093.83" y="65.45" width="6" height="6"/>
<rect x="1094.71" y="66.85" width="6" height="6"/>
<rect x="1095.59" y="71.86" width="6" height="6"/>
<rect x="1096.47" y="80.35" width="6" height="6"/>
<rect x="1097.35" y="91.42" width="6" height="6"/>
<rect x="1098.23" y="103.41" width="6" height="6"/>
<rect x="1099.12" y="114.21" width="6" height="6"/>
<rect x="1100.00" y="121.76" width="6" height="6"/>
<rect x="1100.88" y="124.76" width="6" height="6"/>
<rect x="1101.76" y="123.28" width="6" height="6"/>
<rect x="1102.64" y="118.84" width="6" height="6"/>
<rect x="1103.52" y="113.93" width="6" height="6"/>
<rect x="1104.40" y="110.96" width="6" height="6"/>
<rect x="1105.29" y="111.11" width="6" height="6"/>
<rect x="1106.17" y="113.77" width="6" height="6"/>
<rect x="1107.05" y="116.71" width="6" height="6"/>
<rect x="1107.93" y="117.20" width="6" height="6"/>
<rect x="1108.81" y="113.32" width="6" height="6"/>
<rect x="1109.69" y="104.92" width="6" height="6"/>
<rect x="1110.58" y="93.80" width="6" height="6"/>
<rect x="1111.46" y="82.85" width="6" height="6"/>
<rect x="1112.34" y="74.79" width="6" height="6"/>
<rect x="1113.22" y="70.98" width="6" height="6"/>
<rect x="1114.10" y="71.04" width="6" height="6"/>
<rect x="1114.98" y="73.17" width="6" height="6"/>
<rect x="1115.87" y="75.18" width="6" height="6"/>
<rect x="1116.75" y="75.46" width="6" height="6"/>
<rect x="1117.63" y="73.57" width="6" height="6"/>
<rect x="1118.51" y="70.26" width="6" height="6"/>
<rect x="1119.39" y="67.01" width="6" height="6"/>
<rect x="1120.27" y="65.45" width="6" height="6"/>
<rect x="1121.16" y="66.85" width="6" height="6"/>
<rect x="1122.04" y="71.86" width="6" height="6"/>
<rect x="1122.92" y="80.35" width="6" height="6"/>
<rect x="1123.80" y="91.42" width="6" height="6"/>
<rect x="1124.68" y="103.41" width="6" height="6"/>
<rect x="1125.56" y="114.21" width="6" height="6"/>
<rect x="1126.44" y="121.76" width="6" height="6"/>
<rect x="1127.33" y="124.76" width="6" height="6"/>
<rect x="1128.21" y="123.28" width="6" height="6"/>
<rect x="1129.09" y="118.84" width="6" height="6"/>
<rect x="1129.97" y="113.93" width="6" height="6"/>
<rect x="1130.85" y="110.96" width="6" height="6"/>
<rect x="1131.73" y="111.11" width="6" height="6"/>
<rect x="1132.62" y="113.77" width="6" height="6"/>
<rect x="1133.50" y="116.71" width="6" height="6"/>
<rect x="1134.38" y="117.20" width="6" height="6"/>
<rect x="1135.26" y="113.32" width="6" height="6"/>
<rect x="1136.14" y="104.92" width="6" height="6"/>
<rect x="1137.02" y="93.80" width="6" height="6"/>
<rect x="1137.91" y="82.85" width="6" height="6"/>
<rect x="1138.79" y="74.79" width="6" height="6"/>
<rect x="1139.67" y="70.98" width="6" height="6"/>
<rect x="1140.55" y="71.04" width="6" height="6"/>
<rect x="1141.43" y="73.17" width="6" height="6"/>
<rect x="1142.31" y="75.18" width="6" height="6"/>
<rect x="1143.20" y="75.46" width="6" height="6"/>
<rect x="1144.08" y="73.57" width="6" height="6"/>
<rect x="1144.96" y="70.26" width="6" height="6"/>
<rect x="1145.84" y="67.01" width="6" height="6"/>
<rect x="1146.72" y="65.45" width="6" height="6"/>
<rect x="1147.60" y="66.85" width="6" height="6"/>
<rect x="1148.48" y="71.86" width="6" height="6"/>
<rect x="1149.37" y="80.35" width="6" height="6"/>
<rect x="1150.25" y="91.42" width="6" height="6"/>
<rect x="1151.13" y="103.41" width="6" height="6"/>
<rect x="1152.01" y="114.21" width="6" height="6"/>
<rect x="1152.89" y="121.76" width="6" height="6"/>
<rect x="1153.77" y="124.76" width="6" height="6"/>
<rect x="1154.66" y="123.28" width="6" height="6"/>
<rect x="1155.54" y="118.84" width="6" height="6"/>
<rect x="1156.42" y="113.93" width="6" height="6"/>
<rect x="1157.30" y="110.96" width="6" height="6"/>
<rect x="1158.18" y="111.11" width="6" height="6"/>
<rect x="1159.06" y="113.77" width="6" height="6"/>
<rect x="1159.95" y="116.71" width="6" height="6"/>
<rect x="1160.83" y="117.20" width="6" height="6"/>
<rect x="1161.71" y="113.32" width="6" height="6"/>
<rect x="1162.59" y="104.92" width="6" height="6"/>
<rect x="1163.47" y="93.80" width="6" height="6"/>
<rect x="1164.35" y="82.85" width="6" height="6"/>
<rect x="1165.24" y="74.79" width="6" height="6"/>
<rect x="1166.12" y="70.98" width="6" height="6"/>
<rect x="1167.00" y="71.04" width="6" height="6"/>
<rect x="1167.88" y="73.17" width="6" height="6"/>
<rect x="1168.76" y="75.18" width="6" height="6"/>
<rect x="1169.64" y="75.46" width="6" height="6"/>
<rect x="1170.52" y="73.57" width="6" height="6"/>
<rect x="1171.41" y="70.26" width="6" height="6"/>
<rect x="1172.29" y="67.01" width="6" height="6"/>
<rect x="1173.17" y="65.45" width="6" height="6"/>
<rect x="1174.05" y="66.85" width="6" height="6"/>
<rect x="1174.93" y="71.86" width="6" height="6"/>
<rect x="1175.81" y="80.35" width="6" height="6"/>
<rect x="1176.70" y="91.42" width="6" height="6"/>
<rect x="1177.58" y="103.41" width="6" height="6"/>
<rect x="1178.46" y="114.21" width="6" height="6"/>
<rect x="1179.34" y="121.76" width="6" height="6"/>
<rect x="1180.22" y="124.76" width="6" height="6"/>
<rect x="1181.10" y="123.28" width="6" height="6"/>
<rect x="1181.99" y="118.84" width="6" height="6"/>
<rect x="1182.87" y="113.93" width="6" height="6"/>
<rect x="1183.75" y="110.96" width="6" height="6"/>
<rect x="1184.63" y="111.11" width="6" height="6"/>
<rect x="1185.51" y="113.77" width="6" height="6"/>
<rect x="1186.39" y="116.71" width="6" height="6"/>
<rect x="1187.28" y="117.20" width="6" height="6"/>
<rect x="1188.16" y="113.32" width="6" height="6"/>
<rect x="1189.04" y="104.92" width="6" height="6"/>
<rect x="1189.92" y="93.80" width="6" height="6"/>
<rect x="1190.80" y="82.85" width="6" height="6"/>
<rect x="1191.68" y="74.79" width="6" height="6"/>
<rect x="1192.56" y="70.98" width="6" height="6"/>
<rect x="1193.45" y="71.04" width="6" height="6"/>
<rect x="1194.33" y="73.17" width="6" height="6"/>
<rect x="1195.21" y="75.18" width="6" height="6"/>
<rect x="1196.09" y="75.46" width="6" height="6"/>
<rect x="1196.97" y="73.57" width="6" height="6"/>
<rect x="1197.85" y="70.26" width="6" height="6"/>
<rect x="1198.74" y="67.01" width="6" height="6"/>
<rect x="1199.62" y="65.45" width="6" height="6"/>
<rect x="1200.50" y="66.85" width="6" height="6"/>
<rect x="1201.38" y="71.86" width="6" height="6"/>
<rect x="1202.26" y="80.35" width="6" height="6"/>
<rect x="1203.14" y="91.42" width="6" height="6"/>
<rect x="1204.03" y="103.41" width="6" height="6"/>
<rect x="1204.91" y="114.21" width="6" height="6"/>
<rect x="1205.79" y="121.76" width="6" height="6"/>
<rect x="1206.67" y="124.76" width="6" height="6"/>
<rect x="1207.55" y="123.28" width="6" height="6"/>
<rect x="1208.43" y="118.84" width="6" height="6"/>
<rect x="1209.32" y="113.93" width="6" height="6"/>
<rect x="1210.20" y="110.96" width="6" height="6"/>
<rect x="1211.08" y="111.11" width="6" height="6"/>
<rect x="1211.96" y="113.77" width="6" height="6"/>
<rect x="1212.84" y="116.71" width="6" height="6"/>
<rect x="1213.72" y="117.20" width="6" height="6"/>
<rect x="1214.60" y="113.32" width="6" height="6"/>
<rect x="1215.49" y="104.92" width="6" height="6"/>
<rect x="1216.37" y="93.80" width="6" height="6"/>
<rect x="1217.25" y="82.85" width="6" height="6"/>
<rect x="1218.13" y="74.79" width="6" height="6"/>
<rect x="1219.01" y="70.98" width="6" height="6"/>
<rect x="1219.89" y="71.04" width="6" height="6"/>
<rect x="1220.78" y="73.17" width="6" height="6"/>
<rect x="1221.66" y="75.18" width="6" height="6"/>
<rect x="1222.54" y="75.46" width="6" height="6"/>
<rect x="1223.42" y="73.57" width="6" height="6"/>
<rect x="1224.30" y="70.26" width="6" height="6"/>
<rect x="1225.18" y="67.01" width="6" height="6"/>
<rect x="1226.07" y="65.45" width="6" height="6"/>
<rect x="1226.95" y="66.85" width="6" height="6"/>
<rect x="1227.83" y="71.86" width="6" height="6"/>
<rect x="1228.71" y="80.35" width="6" height="6"/>
<rect x="1229.59" y="91.42" width="6" height="6"/>
<rect x="1230.47" y="103.41" width="6" height="6"/>
<rect x="1231.36" y="114.21" width="6" height="6"/>
<rect x="1232.24" y="121.76" width="6" height="6"/>
<rect x="1233.12" y="124.76" width="6" height="6"/>
<rect x="1234.00" y="123.28" width="6" height="6"/>
<rect x="1234.88" y="118.84" width="6" height="6"/>
<rect x="1235.76" y="113.93" width="6" height="6"/>
<rect x="1236.64" y="110.96" width="6" height="6"/>
<rect x="1237.53" y="111.11" width="6" height="6"/>
<rect x="1238.41" y="113.77" width="6" height="6"/>
<rect x="1239.29" y="116.71" width="6" height="6"/>
<rect x="1240.17" y="117.20" width="6" height="6"/>
<rect x="1241.05" y="113.32" width="6" height="6"/>
<rect x="1241.93" y="104.92" width="6" height="6"/>
<rect x="1242.82" y="93.80" width="6" height="6"/>
<rect x="1243.70" y="82.85" width="6" height="6"/>
<rect x="1244.58" y="74.79" width="6" height="6"/>
<rect x="1245.46" y="70.98" width="6" height="6"/>
<rect x="1246.34" y="71.04" width="6" height="6"/>
<rect x="1247.22" y="73.17" width="6" height="6"/>
<rect x="1248.11" y="75.18" width="6" height="6"/>
<rect x="1248.99" y="75.46" width="6" height="6"/>
<rect x="1249.87" y="73.57" width="6" height="6"/>
<rect x="1250.75" y="70.26" width="6" height="6"/>
<rect x="1251.63" y="67.01" width="6" height="6"/>
<rect x="1252.51" y="65.45" width="6" height="6"/>
<rect x="1253.40" y="66.85" width="6" height="6"/>
<rect x="1254.28" y="71.86" width="6" height="6"/>
<rect x="1255.16" y="80.35" width="6" height="6"/>
<rect x="1256.04" y="91.42" width="6" height="6"/>
<rect x="1256.92" y="103.41" width="6" height="6"/>
<rect x="1257.80" y="114.21" width="6" height="6"/>
<rect x="1258.68" y="121.76" width="6" height="6"/>
<rect x="1259.57" y="124.76" width="6" height="6"/>
<rect x="1260.45" y="123.28" width="6" height="6"/>
<rect x="1261.33" y="118.84" width="6" height="6"/>
<rect x="1262.21" y="113.93" width="6" height="6"/>
<rect x="1263.09" y="110.96" width="6" height="6"/>
<rect x="1263.97" y="111.11" width="6" height="6"/>
<rect x="1264.86" y="113.77" width="6" height="6"/>
<rect x="1265.74" y="116.71" width="6" height="6"/>
<rect x="1266.62" y="117.20" width="6" height="6"/>
<rect x="1267.50" y="113.32" width="6" height="6"/>
<rect x="1268.38" y="104.92" width="6" height="6"/>
<rect x="1269.26" y="93.80" width="6" height="6"/>
<rect x="1270.15" y="82.85" width="6" height="6"/>
<rect x="1271.03" y="74.79" width="6" height="6"/>
<rect x="1271.91" y="70.98" width="6" height="6"/>
<rect x="1272.79" y="71.04" width="6" height="6"/>
<rect x="1273.67" y="73.17" width="6" height="6"/>
<rect x="1274.55" y="75.18" width="6" height="6"/>
<rect x="1275.44" y="75.46" width="6" height="6"/>
<rect x="1276.32" y="73.57" width="6" height="6"/>
<rect x="1277.20" y="70.26" width="6" height="6"/>
<rect x="1278.08" y="67.01" width="6" height="6"/>
<rect x="1278.96" y="65.45" width="6" height="6"/>
<rect x="1279.84" y="66.85" width="6" height="6"/>
<rect x="1280.72" y="71.86" width="6" height="6"/>
<rect x="1281.61" y="80.35" width="6" height="6"/>
<rect x="1282.49" y="91.42" width="6" height="6"/>
<rect x="1283.37" y="103.41" width="6" height="6"/>
<rect x="1284.25" y="114.21" width="6" height="6"/>
<rect x="1285.13" y="121.76" width="6" height="6"/>
<rect x="1286.01" y="124.76" width="6" height="6"/>
<rect x="1286.90" y="123.28" width="6" height="6"/>
<rect x="1287.78" y="118.84" width="6" height="6"/>
<rect x="1288.66" y="113.93" width="6" height="6"/>
<rect x="1289.54" y="110.96" width="6" height="6"/>
<rect x="1290.42" y="111.11" width="6" height="6"/>
<rect x="1291.30" y="113.77" width="6" height="6"/>
<rect x="1292.19" y="116.71" width="6" height="6"/>
<rect x="1293.07" y="117.20" width="6" height="6"/>
<rect x="1293.95" y="113.32" width="6" height="6"/>
<rect x="1294.83" y="104.92" width="6" height="6"/>
<rect x="1295.71" y="93.80" width="6" height="6"/>
<rect x="1296.59" y="82.85" width="6" height="6"/>
<rect x="1297.48" y="74.79" width="6" height="6"/>
<rect x="1298.36" y="70.98" width="6" height="6"/>
<rect x="1299.24" y="71.04" width="6" height="6"/>
<rect x="1300.12" y="73.17" width="6" height="6"/>
<rect x="1301.00" y="75.18" width="6" height="6"/>
<rect x="1301.88" y="75.46" width="6" height="6"/>
<rect x="1302.76" y="73.57" width="6" height="6"/>
<rect x="1303.65" y="70.26" width="6" height="6"/>
<rect x="1304.53" y="67.01" width="6" height="6"/>
<rect x="1305.41" y="65.45" width="6" height="6"/>
<rect x="1306.29" y="66.85" width="6" height="6"/>
<rect x="1307.17" y="71.86" width="6" height="6"/>
<rect x="1308.05" y="80.35" width="6" height="6"/>
<rect x="1308.94" y="91.42" width="6" height="6"/>
<rect x="1309.82" y="103.41" width="6" height="6"/>
<rect x="1310.70" y="114.21" width="6" height="6"/>
<rect x="1311.58" y="121.76" width="6" height="6"/>
<rect x="1312.46" y="124.76" width="6" height="6"/>
<rect x="1313.34" y="123.28" width="6" height="6"/>
<rect x="1314.23" y="118.84" width="6" height="6"/>
<rect x="1315.11" y="113.93" width="6" height="6"/>
<rect x="1315.99" y="110.96" width="6" height="6"/>
<rect x="1316.87" y="111.11" width="6" height="6"/>
<rect x="1317.75" y="113.77" width="6" height="6"/>
<rect x="1318.63" y="116.71" width="6" height="6"/>
<rect x="1319.52" y="117.20" width="6" height="6"/>
<rect x="1320.40" y="113.32" width="6" height="6"/>
<rect x="1321.28" y="104.92" width="6" height="6"/>
<rect x="1322.16" y="93.80" width="6" height="6"/>
<rect x="1323.04" y="82.85" width="6" height="6"/>
<rect x="1323.92" y="74.79" width="6" height="6"/>
<rect x="1324.80" y="70.98" width="6" height="6"/>
<rect x="1325.69" y="71.04" width="6" height="6"/>
<rect x="1326.57" y="73.17" width="6" height="6"/>
<rect x="1327.45" y="75.18" width="6" height="6"/>
<rect x="1328.33" y="75.46" width="6" height="6"/>
<rect x="1329.21" y="73.57" width="6" height="6"/>
<rect x="1330.09" y="70.26" width="6" height="6"/>
<rect x="1330.98" y="67.01" width="6" height="6"/>
<rect x="1331.86" y="65.45" width="6" height="6"/>
<rect x="1332.74" y="66.85" width="6" height="6"/>
<rect x="1333.62" y="71.86" width="6" height="6"/>
<rect x="1334.50" y="80.35" width="6" height="6"/>
<rect x="1335.38" y="91.42" width="6" height="6"/>
<rect x="1336.27" y="103.41" width="6" height="6"/>
<rect x="1337.15" y="114.21" width="6" height="6"/>
<rect x="1338.03" y="121.76" width="6" height="6"/>
<rect x="1338.91" y="124.76" width="6" height="6"/>
<rect x="1339.79" y="123.28" width="6" height="6"/>
<rect x="1340.67" y="118.84" width="6" height="6"/>
<rect x="1341.56" y="113.93" width="6" height="6"/>
<rect x="1342.44" y="110.96" width="6" height="6"/>
<rect x="1343.32" y="111.11" width="6" height="6"/>
<rect x="1344.20" y="113.77" width="6" height="6"/>
<rect x="1345.08" y="116.71" width="6" height="6"/>
<rect x="1345.96" y="117.20" width="6" height="6"/>
<rect x="1346.84" y="113.32" width="6" height="6"/>
<rect x="1347.73" y="104.92" width="6" height="6"/>
<rect x="1348.61" y="93.80" width="6" height="6"/>
<rect x="1349.49" y="82.85" width="6" height="6"/>
<rect x="1350.37" y="74.79" width="6" height="6"/>
<rect x="1351.25" y="70.98" width="6" height="6"/>
<rect x="1352.13" y="71.04" width="6" height="6"/>
<rect x="1353.02" y="73.17" width="6" height="6"/>
<rect x="1353.90" y="75.18" width="6" height="6"/>
<rect x="1354.78" y="75.46" width="6" height="6"/>
<rect x="1355.66" y="73.57" width="6" height="6"/>
<rect x="1356.54" y="70.26" width="6" height="6"/>
<rect x="1357.42" y="67.01" width="6" height="6"/>
<rect x="1358.31" y="65.45" width="6" height="6"/>
<rect x="1359.19" y="66.85" width="6" height="6"/>
<rect x="1360.07" y="71.86" width="6" height="6"/>
<rect x="1360.95" y="80.35" width="6" height="6"/>
<rect x="1361.83" y="91.42" width="6" height="6"/>
<rect x="1362.71" y="103.41" width="6" height="6"/>
<rect x="1363.60" y="114.21" width="6" height="6"/>
<rect x="1364.48" y="121.76" width="6" height="6"/>
<rect x="1365.36" y="124.76" width="6" height="6"/>
<rect x="1366.24" y="123.28" width="6" height="6"/>
<rect x="1367.12" y="118.84" width="6" height="6"/>
<rect x="1368.00" y="113.93" width="6" height="6"/>
<rect x="1368.88" y="110.96" width="6" height="6"/>
<rect x="1369.77" y="111.11" width="6" height="6"/>
<rect x="1370.65" y="113.77" width="6" height="6"/>
<rect x="1371.53" y="116.71" width="6" height="6"/>
<rect x="1372.41" y="117.20" width="6" height="6"/>
<rect x="1373.29" y="113.32" width="6" height="6"/>
<rect x="1374.17" y="104.92" width="6" height="6"/>
<rect x="1375.06" y="93.80" width="6" height="6"/>
<rect x="1375.94" y="82.85" width="6" height="6"/>
<rect x="1376.82" y="74.79" width="6" height="6"/>
<rect x="1377.70" y="70.98" width="6" height="6"/>
<rect x="1378.58" y="71.04" width="6" height="6"/>
<rect x="1379.46" y="73.17" width="6" height="6"/>
<rect x="1380.35" y="75.18" width="6" height="6"/>
<rect x="1381.23" y="75.46" width="6" height="6"/>
<rect x="1382.11" y="73.57" width="6" height="6"/>
<rect x="1382.99" y="70.26" width="6" height="6"/>
<rect x="1383.87" y="67.01" width="6" height="6"/>
<rect x="1384.75" y="65.45" width="6" height="6"/>
<rect x="1385.64" y="66.85" width="6" height="6"/>
<rect x="1386.52" y="71.86" width="6" height="6"/>
<rect x="1387.40" y="80.35" width="6" height="6"/>
<rect x="1388.28" y="91.42" width="6" height="6"/>
<rect x="1389.16" y="103.41" width="6" height="6"/>
<rect x="1390.04" y="114.21" width="6" height="6"/>
<rect x="1390.92" y="121.76" width="6" height="6"/>
<rect x="1391.81" y="124.76" width="6" height="6"/>
<rect x="1392.69" y="123.28" width="6" height="6"/>
<rect x="1393.57" y="118.84" width="6" height="6"/>
<rect x="1394.45" y="113.93" width="6" height="6"/>
<rect x="1395.33" y="110.96" width="6" height="6"/>
<rect x="1396.21" y="111.11" width="6" height="6"/>
<rect x="1397.10" y="113.77" width="6" height="6"/>
<rect x="1397.98" y="116.71" width="6" height="6"/>
<rect x="1398.86" y="117.20" width="6" height="6"/>
<rect x="1399.74" y="113.32" width="6" height="6"/>
<rect x="1400.62" y="104.92" width="6" height="6"/>
<rect x="1401.50" y="93.80" width="6" height="6"/>
</g>
<line x1="796.2" y1="131.0" x2="796.2" y2="134.2" stroke="#909090" stroke-width="0.8"/>
<line x1="803.25" y1="131.0" x2="803.25" y2="132.6" stroke="#909090" stroke-width="0.8"/>
<line x1="810.31" y1="131.0" x2="810.31" y2="132.6" stroke="#909090" stroke-width="0.8"/>
<line x1="817.36" y1="131.0" x2="817.36" y2="132.6" stroke="#909090" stroke-width="0.8"/>
<line x1="824.41" y1="131.0" x2="824.41" y2="134.2" stroke="#909090" stroke-width="0.8"/>
<line x1="831.46" y1="131.0" x2="831.46" y2="132.6" stroke="#909090" stroke-width="0.8"/>
<line x1="838.52" y1="131.0" x2="838.52" y2="132.6" stroke="#909090" stroke-width="0.8"/>
<line x1="845.57" y1="131.0" x2="845.57" y2="132.6" stroke="#909090" stroke-width="0.8"/>
<line x1="852.62" y1="131.0" x2="852.62" y2="134.2" stroke="#909090" stroke-width="0.8"/>
<line x1="859.68" y1="131.0" x2="859.68" y2="132.6" stroke="#909090" stroke-width="0.8"/>
<line x1="866.73" y1="131.0" x2="866.73" y2="132.6" stroke="#909090" stroke-width="0.8"/>
<line x1="873.78" y1="131.0" x2="873.78" y2="132.6" stroke="#909090" stroke-width="0.8"/>
<line x1="880.83" y1="131.0" x2="880.83" y2="134.2" stroke="#909090" stroke-width="0.8"/>
<line x1="887.89" y1="131.0" x2="887.89" y2="132.6" stroke="#909090" stroke-width="0.8"/>
<line x1="894.94" y1="131.0" x2="894.94" y2="132.6" stroke="#909090" stroke-width="0.8"/>
<line x1="901.99" y1="131.0" x2="901.99" y2="132.6" stroke="#909090" stroke-width="0.8"/>
<line x1="909.04" y1="131.0" x2="909.04" y2="134.2" stroke="#909090" stroke-width="0.8"/>
<line x1="916.1" y1="131.0" x2="916.1" y2="132.6" stroke="#909090" stroke-width="0.8"/>
<line x1="923.15" y1="131.0" x2="923.15" y2="132.6" stroke="#909090" stroke-width="0.8"/>
<line x1="930.2" y1="131.0" x2="930.2" y2="132.6" stroke="#909090" stroke-width="0.8"/>
<line x1="937.26" y1="131.0" x2="937.26" y2="134.2" stroke="#909090" stroke-width="0.8"/>
<line x1="944.31" y1="131.0" x2="944.31" y2="132.6" stroke="#909090" stroke-width="0.8"/>
<line x1="951.36" y1="131.0" x2="951.36" y2="132.6" stroke="#909090" stroke-width="0.8"/>
<line x1="958.41" y1="131.0" x2="958.41" y2="132.6" stroke="#909090" stroke-width="0.8"/>
<line x1="965.47" y1="131.0" x2="965.47" y2="134.2" stroke="#909090" stroke-width="0.8"/>
<line x1="972.52" y1="131.0" x2="972.52" y2="132.6" stroke="#909090" stroke-width="0.8"/>
<line x1="979.57" y1="131.0" x2="979.57" y2="132.6" stroke="#909090" stroke-width="0.8"/>
<line x1="986.63" y1="131.0" x2="986.63" y2="132.6" stroke="#909090" stroke-width="0.8"/>
<line x1="993.68" y1="131.0" x2="993.68" y2="134.2" stroke="#909090" stroke-width="0.8"/>
<line x1="1000.73" y1="131.0" x2="1000.73" y2="132.6" stroke="#909090" stroke-width="0.8"/>
<line x1="1007.78" y1="131.0" x2="1007.78" y2="132.6" stroke="#909090" stroke-width="0.8"/>
<line x1="1014.84" y1="131.0" x2="1014.84" y2="132.6" stroke="#909090" stroke-width="0.8"/>
<line x1="1021.89" y1="131.0" x2="1021.89" y2="134.2" stroke="#909090" stroke-width="0.8"/>
<line x1="1028.94" y1="131.0" x2="1028.94" y2="132.6" stroke="#909090" stroke-width="0.8"/>
<line x1="1036.0" y1="131.0" x2="1036.0" y2="132.6" stroke="#909090" stroke-width="0.8"/>
<line x1="1043.05" y1="131.0" x2="1043.05" y2="132.6" stroke="#909090" stroke-width="0.8"/>
<line x1="1050.1" y1="131.0" x2="1050.1" y2="134.2" stroke="#909090" stroke-width="0.8"/>
<line x1="1057.15" y1="131.0" x2="1057.15" y2="132.6" stroke="#909090" stroke-width="0.8"/>
<line x1="1064.21" y1="131.0" x2="1064.21" y2="132.6" stroke="#909090" stroke-width="0.8"/>
<line x1="1071.26" y1="131.0" x2="1071.26" y2="132.6" stroke="#909090" stroke-width="0.8"/>
<line x1="1078.31" y1="131.0" x2="1078.31" y2="134.2" stroke="#909090" stroke-width="0.8"/>
<line x1="1085.36" y1="131.0" x2="1085.36" y2="132.6" stroke="#909090" stroke-width="0.8"/>
<line x1="1092.42" y1="131.0" x2="1092.42" y2="132.6" stroke="#909090" stroke-width="0.8"/>
<line x1="1099.47" y1="131.0" x2="1099.47" y2="132.6" stroke="#909090" stroke-width="0.8"/>
<line x1="1106.52" y1="131.0" x2="1106.52" y2="134.2" stroke="#909090" stroke-width="0.8"/>
<line x1="1113.58" y1="131.0" x2="1113.58" y2="132.6" stroke="#909090" stroke-width="0.8"/>
<line x1="1120.63" y1="131.0" x2="1120.63" y2="132.6" stroke="#909090" stroke-width="0.8"/>
<line x1="1127.68" y1="131.0" x2="1127.68" y2="132.6" stroke="#909090" stroke-width="0.8"/>
<line x1="1134.73" y1="131.0" x2="1134.73" y2="134.2" stroke="#909090" stroke-width="0.8"/>
<line x1="1141.79" y1="131.0" x2="1141.79" y2="132.6" stroke="#909090" stroke-width="0.8"/>
<line x1="1148.84" y1="131.0" x2="1148.84" y2="132.6" stroke="#909090" stroke-width="0.8"/>
<line x1="1155.89" y1="131.0" x2="1155.89" y2="132.6" stroke="#909090" stroke-width="0.8"/>
<line x1="1162.95" y1="131.0" x2="1162.95" y2="134.2" stroke="#909090" stroke-width="0.8"/>
<line x1="1170.0" y1="131.0" x2="1170.0" y2="132.6" stroke="#909090" stroke-width="0.8"/>
<line x1="1177.05" y1="131.0" x2="1177.05" y2="132.6" stroke="#909090" stroke-width="0.8"/>
<line x1="1184.1" y1="131.0" x2="1184.1" y2="132.6" stroke="#909090" stroke-width="0.8"/>
<line x1="1191.16" y1="131.0" x2="1191.16" y2="134.2" stroke="#909090" stroke-width="0.8"/>
<line x1="1198.21" y1="131.0" x2="1198.21" y2="132.6" stroke="#909090" stroke-width="0.8"/>
<line x1="1205.26" y1="131.0" x2="1205.26" y2="132.6" stroke="#909090" stroke-width="0.8"/>
<line x1="1212.32" y1="131.0" x2="1212.32" y2="132.6" stroke="#909090" stroke-width="0.8"/>
<line x1="1219.37" y1="131.0" x2="1219.37" y2="134.2" stroke="#909090" stroke-width="0.8"/>
<line x1="1226.42" y1="131.0" x2="1226.42" y2="132.6" stroke="#909090" stroke-width="0.8"/>
<line x1="1233.47" y1="131.0" x2="1233.47" y2="132.6" stroke="#909090" stroke-width="0.8"/>
<line x1="1240.53" y1="131.0" x2="1240.53" y2="132.6" stroke="#909090" stroke-width="0.8"/>
<line x1="1247.58" y1="131.0" x2="1247.58" y2="134.2" stroke="#909090" stroke-width="0.8"/>
<line x1="1254.63" y1="131.0" x2="1254.63" y2="132.6" stroke="#909090" stroke-width="0.8"/>
<line x1="1261.68" y1="131.0" x2="1261.68" y2="132.6" stroke="#909090" stroke-width="0.8"/>
<line x1="1268.74" y1="131.0" x2="1268.74" y2="132.6" stroke="#909090" stroke-width="0.8"/>
<line x1="1275.79" y1="131.0" x2="1275.79" y2="134.2" stroke="#909090" stroke-width="0.8"/>
<line x1="1282.84" y1="131.0" x2="1282.84" y2="132.6" stroke="#909090" stroke-width="0.8"/>
<line x1="1289.9" y1="131.0" x2="1289.9" y2="132.6" stroke="#909090" stroke-width="0.8"/>
<line x1="1296.95" y1="131.0" x2="1296.95" y2="132.6" stroke="#909090" stroke-width="0.8"/>
<line x1="1304.0" y1="131.0" x2="1304.0" y2="134.2" stroke="#909090" stroke-width="0.8"/>
<line x1="1311.05" y1="131.0" x2="1311.05" y2="132.6" stroke="#909090" stroke-width="0.8"/>
<line x1="1318.11" y1="131.0" x2="1318.11" y2="132.6" stroke="#909090" stroke-width="0.8"/>
<line x1="1325.16" y1="131.0" x2="1325.16" y2="132.6" stroke="#909090" stroke-width="0.8"/>
<line x1="1332.21" y1="131.0" x2="1332.21" y2="134.2" stroke="#909090" stroke-width="0.8"/>
<line x1="1339.27" y1="131.0" x2="1339.27" y2="132.6" stroke="#909090" stroke-width="0.8"/>
<line x1="1346.32" y1="131.0" x2="1346.32" y2="132.6" stroke="#909090" stroke-width="0.8"/>
<line x1="1353.37" y1="131.0" x2="1353.37" y2="132.6" stroke="#909090" stroke-width="0.8"/>
<line x1="1360.42" y1="131.0" x2="1360.42" y2="134.2" stroke="#909090" stroke-width="0.8"/>
<line x1="1367.48" y1="131.0" x2="1367.48" y2="132.6" stroke="#909090" stroke-width="0.8"/>
<line x1="1374.53" y1="131.0" x2="1374.53" y2="132.6" stroke="#909090" stroke-width="0.8"/>
<line x1="1381.58" y1="131.0" x2="1381.58" y2="132.6" stroke="#909090" stroke-width="0.8"/>
<line x1="1388.64" y1="131.0" x2="1388.64" y2="134.2" stroke="#909090" stroke-width="0.8"/>
<line x1="1395.69" y1="131.0" x2="1395.69" y2="132.6" stroke="#909090" stroke-width="0.8"/>
<line x1="1402.74" y1="131.0" x2="1402.74" y2="132.6" stroke="#909090" stroke-width="0.8"/>
<text transform="translate(796.5 142.0) scale(1.0000 1)" font-size="7.4" fill="#202020" text-anchor="middle">0</text>
<text transform="translate(824.71 142.0) scale(1.0000 1)" font-size="7.4" fill="#202020" text-anchor="middle">32</text>
<text transform="translate(852.92 142.0) scale(1.0000 1)" font-size="7.4" fill="#202020" text-anchor="middle">64</text>
<text transform="translate(881.13 142.0) scale(1.0000 1)" font-size="7.4" fill="#202020" text-anchor="middle">96</text>
<text transform="translate(909.34 142.0) scale(1.0000 1)" font-size="7.4" fill="#202020" text-anchor="middle">128</text>
<text transform="translate(937.56 142.0) scale(1.0000 1)" font-size="7.4" fill="#202020" text-anchor="middle">160</text>
<text transform="translate(965.77 142.0) scale(1.0000 1)" font-size="7.4" fill="#202020" text-anchor="middle">192</text>
<text transform="translate(993.98 142.0) scale(1.0000 1)" font-size="7.4" fill="#202020" text-anchor="middle">224</text>
<text transform="translate(1022.19 142.0) scale(1.0000 1)" font-size="7.4" fill="#202020" text-anchor="middle">256</text>
<text transform="translate(1050.4 142.0) scale(1.0000 1)" font-size="7.4" fill="#202020" text-anchor="middle">288</text>
<text transform="translate(1078.61 142.0) scale(1.0000 1)" font-size="7.4" fill="#202020" text-anchor="middle">320</text>
<text transform="translate(1106.82 142.0) scale(1.0000 1)" font-size="7.4" fill="#202020" text-anchor="middle">352</text>
<text transform="translate(1135.03 142.0) scale(1.0000 1)" font-size="7.4" fill="#202020" text-anchor="middle">384</text>
<text transform="translate(1163.25 142.0) scale(1.0000 1)" font-size="7.4" fill="#202020" text-anchor="middle">416</text>
<text transform="translate(1191.46 142.0) scale(1.0000 1)" font-size="7.4" fill="#202020" text-anchor="middle">448</text>
<text transform="translate(1219.67 142.0) scale(1.0000 1)" font-size="7.4" fill="#202020" text-anchor="middle">480</text>
<text transform="translate(1247.88 142.0) scale(1.0000 1)" font-size="7.4" fill="#202020" text-anchor="middle">512</text>
<text transform="translate(1276.09 142.0) scale(1.0000 1)" font-size="7.4" fill="#202020" text-anchor="middle">544</text>
<text transform="translate(1304.3 142.0) scale(1.0000 1)" font-size="7.4" fill="#202020" text-anchor="middle">576</text>
<text transform="translate(1332.51 142.0) scale(1.0000 1)" font-size="7.4" fill="#202020" text-anchor="middle">608</text>
<text transform="translate(1360.72 142.0) scale(1.0000 1)" font-size="7.4" fill="#202020" text-anchor="middle">640</text>
<text transform="translate(1388.94 142.0) scale(1.0000 1)" font-size="7.4" fill="#202020" text-anchor="middle">672</text>
<text transform="translate(786.3 118.9) scale(1.0000 1)" font-size="7.2" fill="#202020" text-anchor="end">-0.1</text>
<line x1="788.8" y1="116.3" x2="791.8" y2="116.3" stroke="#909090" stroke-width="0.8"/>
<text transform="translate(786.3 99.4) scale(1.0000 1)" font-size="7.2" fill="#202020" text-anchor="end">0</text>
<line x1="788.8" y1="96.8" x2="791.8" y2="96.8" stroke="#909090" stroke-width="0.8"/>
<text transform="translate(786.3 79.9) scale(1.0000 1)" font-size="7.2" fill="#202020" text-anchor="end">0.1</text>
<line x1="788.8" y1="77.3" x2="791.8" y2="77.3" stroke="#909090" stroke-width="0.8"/>
<text transform="translate(1079.5 59.8) scale(1.0113 1)" font-size="7.6" fill="#2a2aff" text-anchor="middle">Cogging Data</text>
<text transform="translate(1102 151.2) scale(1.0102 1)" font-size="7.4" fill="#202020" text-anchor="middle">Datapoint</text>
<text transform="translate(750 97.3) rotate(-90) scale(0.9675 1)" font-size="7.4" fill="#202020" text-anchor="middle">Torque[Nm]</text>
<line x1="816.94" y1="176.4" x2="816.94" y2="300.2" stroke="#cecece" stroke-width="1"/>
<line x1="841.47" y1="176.4" x2="841.47" y2="300.2" stroke="#cecece" stroke-width="1"/>
<line x1="866.01" y1="176.4" x2="866.01" y2="300.2" stroke="#cecece" stroke-width="1"/>
<line x1="890.54" y1="176.4" x2="890.54" y2="300.2" stroke="#cecece" stroke-width="1"/>
<line x1="915.08" y1="176.4" x2="915.08" y2="300.2" stroke="#cecece" stroke-width="1"/>
<line x1="939.62" y1="176.4" x2="939.62" y2="300.2" stroke="#cecece" stroke-width="1"/>
<line x1="964.15" y1="176.4" x2="964.15" y2="300.2" stroke="#cecece" stroke-width="1"/>
<line x1="988.69" y1="176.4" x2="988.69" y2="300.2" stroke="#cecece" stroke-width="1"/>
<line x1="1013.22" y1="176.4" x2="1013.22" y2="300.2" stroke="#cecece" stroke-width="1"/>
<line x1="1037.76" y1="176.4" x2="1037.76" y2="300.2" stroke="#cecece" stroke-width="1"/>
<line x1="1062.3" y1="176.4" x2="1062.3" y2="300.2" stroke="#cecece" stroke-width="1"/>
<line x1="1086.83" y1="176.4" x2="1086.83" y2="300.2" stroke="#cecece" stroke-width="1"/>
<line x1="1111.37" y1="176.4" x2="1111.37" y2="300.2" stroke="#cecece" stroke-width="1"/>
<line x1="1135.9" y1="176.4" x2="1135.9" y2="300.2" stroke="#cecece" stroke-width="1"/>
<line x1="1160.44" y1="176.4" x2="1160.44" y2="300.2" stroke="#cecece" stroke-width="1"/>
<line x1="1184.98" y1="176.4" x2="1184.98" y2="300.2" stroke="#cecece" stroke-width="1"/>
<line x1="1209.51" y1="176.4" x2="1209.51" y2="300.2" stroke="#cecece" stroke-width="1"/>
<line x1="1234.05" y1="176.4" x2="1234.05" y2="300.2" stroke="#cecece" stroke-width="1"/>
<line x1="1258.58" y1="176.4" x2="1258.58" y2="300.2" stroke="#cecece" stroke-width="1"/>
<line x1="1283.12" y1="176.4" x2="1283.12" y2="300.2" stroke="#cecece" stroke-width="1"/>
<line x1="1307.66" y1="176.4" x2="1307.66" y2="300.2" stroke="#cecece" stroke-width="1"/>
<line x1="1332.19" y1="176.4" x2="1332.19" y2="300.2" stroke="#cecece" stroke-width="1"/>
<line x1="1356.73" y1="176.4" x2="1356.73" y2="300.2" stroke="#cecece" stroke-width="1"/>
<line x1="1381.26" y1="176.4" x2="1381.26" y2="300.2" stroke="#cecece" stroke-width="1"/>
<line x1="1405.8" y1="176.4" x2="1405.8" y2="300.2" stroke="#cecece" stroke-width="1"/>
<line x1="791.8" y1="282.95" x2="1408.5" y2="282.95" stroke="#cecece" stroke-width="1"/>
<line x1="791.8" y1="265.8" x2="1408.5" y2="265.8" stroke="#cecece" stroke-width="1"/>
<line x1="791.8" y1="248.65" x2="1408.5" y2="248.65" stroke="#cecece" stroke-width="1"/>
<line x1="791.8" y1="231.5" x2="1408.5" y2="231.5" stroke="#cecece" stroke-width="1"/>
<line x1="791.8" y1="214.35" x2="1408.5" y2="214.35" stroke="#cecece" stroke-width="1"/>
<line x1="791.8" y1="197.2" x2="1408.5" y2="197.2" stroke="#cecece" stroke-width="1"/>
<line x1="791.8" y1="180.05" x2="1408.5" y2="180.05" stroke="#cecece" stroke-width="1"/>
<rect x="861.44" y="178.16" width="3.0" height="122.04" fill="#ff0000" stroke="#700000" stroke-width="0.7"/>
<rect x="931.98" y="284.24" width="3.0" height="15.96" fill="#ff0000" stroke="#700000" stroke-width="0.7"/>
<rect x="1002.52" y="257.74" width="3.0" height="42.46" fill="#ff0000" stroke="#700000" stroke-width="0.7"/>
<rect x="1073.06" y="297.53" width="3.0" height="2.67" fill="#ff0000" stroke="#700000" stroke-width="0.7"/>
<rect x="1143.61" y="298.21" width="3.0" height="1.99" fill="#ff0000" stroke="#700000" stroke-width="0.7"/>
<rect x="1214.15" y="297.53" width="3.0" height="2.67" fill="#ff0000" stroke="#700000" stroke-width="0.7"/>
<rect x="1284.69" y="299.07" width="3.0" height="1.13" fill="#ff0000" stroke="#700000" stroke-width="0.7"/>
<rect x="1355.23" y="299.07" width="3.0" height="1.13" fill="#ff0000" stroke="#700000" stroke-width="0.7"/>
<line x1="791.8" y1="176.4" x2="1408.5" y2="176.4" stroke="#303030" stroke-width="1"/>
<line x1="1408.5" y1="176.4" x2="1408.5" y2="300.2" stroke="#303030" stroke-width="1"/>
<line x1="791.8" y1="175.9" x2="791.8" y2="301.2" stroke="#101010" stroke-width="2"/>
<line x1="790.8" y1="300.8" x2="1409.0" y2="300.8" stroke="#101010" stroke-width="1.2"/>
<line x1="792.8" y1="300.3" x2="1408.5" y2="300.3" stroke="#d80000" stroke-width="1.5"/>
<line x1="798.53" y1="301.2" x2="798.53" y2="302.7" stroke="#909090" stroke-width="0.7"/>
<line x1="804.67" y1="301.2" x2="804.67" y2="302.7" stroke="#909090" stroke-width="0.7"/>
<line x1="810.8" y1="301.2" x2="810.8" y2="302.7" stroke="#909090" stroke-width="0.7"/>
<line x1="816.94" y1="301.2" x2="816.94" y2="304.2" stroke="#909090" stroke-width="0.7"/>
<line x1="823.07" y1="301.2" x2="823.07" y2="302.7" stroke="#909090" stroke-width="0.7"/>
<line x1="829.2" y1="301.2" x2="829.2" y2="302.7" stroke="#909090" stroke-width="0.7"/>
<line x1="835.34" y1="301.2" x2="835.34" y2="302.7" stroke="#909090" stroke-width="0.7"/>
<line x1="841.47" y1="301.2" x2="841.47" y2="304.2" stroke="#909090" stroke-width="0.7"/>
<line x1="847.61" y1="301.2" x2="847.61" y2="302.7" stroke="#909090" stroke-width="0.7"/>
<line x1="853.74" y1="301.2" x2="853.74" y2="302.7" stroke="#909090" stroke-width="0.7"/>
<line x1="859.87" y1="301.2" x2="859.87" y2="302.7" stroke="#909090" stroke-width="0.7"/>
<line x1="866.01" y1="301.2" x2="866.01" y2="304.2" stroke="#909090" stroke-width="0.7"/>
<line x1="872.14" y1="301.2" x2="872.14" y2="302.7" stroke="#909090" stroke-width="0.7"/>
<line x1="878.28" y1="301.2" x2="878.28" y2="302.7" stroke="#909090" stroke-width="0.7"/>
<line x1="884.41" y1="301.2" x2="884.41" y2="302.7" stroke="#909090" stroke-width="0.7"/>
<line x1="890.54" y1="301.2" x2="890.54" y2="304.2" stroke="#909090" stroke-width="0.7"/>
<line x1="896.68" y1="301.2" x2="896.68" y2="302.7" stroke="#909090" stroke-width="0.7"/>
<line x1="902.81" y1="301.2" x2="902.81" y2="302.7" stroke="#909090" stroke-width="0.7"/>
<line x1="908.95" y1="301.2" x2="908.95" y2="302.7" stroke="#909090" stroke-width="0.7"/>
<line x1="915.08" y1="301.2" x2="915.08" y2="304.2" stroke="#909090" stroke-width="0.7"/>
<line x1="921.21" y1="301.2" x2="921.21" y2="302.7" stroke="#909090" stroke-width="0.7"/>
<line x1="927.35" y1="301.2" x2="927.35" y2="302.7" stroke="#909090" stroke-width="0.7"/>
<line x1="933.48" y1="301.2" x2="933.48" y2="302.7" stroke="#909090" stroke-width="0.7"/>
<line x1="939.62" y1="301.2" x2="939.62" y2="304.2" stroke="#909090" stroke-width="0.7"/>
<line x1="945.75" y1="301.2" x2="945.75" y2="302.7" stroke="#909090" stroke-width="0.7"/>
<line x1="951.88" y1="301.2" x2="951.88" y2="302.7" stroke="#909090" stroke-width="0.7"/>
<line x1="958.02" y1="301.2" x2="958.02" y2="302.7" stroke="#909090" stroke-width="0.7"/>
<line x1="964.15" y1="301.2" x2="964.15" y2="304.2" stroke="#909090" stroke-width="0.7"/>
<line x1="970.29" y1="301.2" x2="970.29" y2="302.7" stroke="#909090" stroke-width="0.7"/>
<line x1="976.42" y1="301.2" x2="976.42" y2="302.7" stroke="#909090" stroke-width="0.7"/>
<line x1="982.55" y1="301.2" x2="982.55" y2="302.7" stroke="#909090" stroke-width="0.7"/>
<line x1="988.69" y1="301.2" x2="988.69" y2="304.2" stroke="#909090" stroke-width="0.7"/>
<line x1="994.82" y1="301.2" x2="994.82" y2="302.7" stroke="#909090" stroke-width="0.7"/>
<line x1="1000.96" y1="301.2" x2="1000.96" y2="302.7" stroke="#909090" stroke-width="0.7"/>
<line x1="1007.09" y1="301.2" x2="1007.09" y2="302.7" stroke="#909090" stroke-width="0.7"/>
<line x1="1013.22" y1="301.2" x2="1013.22" y2="304.2" stroke="#909090" stroke-width="0.7"/>
<line x1="1019.36" y1="301.2" x2="1019.36" y2="302.7" stroke="#909090" stroke-width="0.7"/>
<line x1="1025.49" y1="301.2" x2="1025.49" y2="302.7" stroke="#909090" stroke-width="0.7"/>
<line x1="1031.63" y1="301.2" x2="1031.63" y2="302.7" stroke="#909090" stroke-width="0.7"/>
<line x1="1037.76" y1="301.2" x2="1037.76" y2="304.2" stroke="#909090" stroke-width="0.7"/>
<line x1="1043.89" y1="301.2" x2="1043.89" y2="302.7" stroke="#909090" stroke-width="0.7"/>
<line x1="1050.03" y1="301.2" x2="1050.03" y2="302.7" stroke="#909090" stroke-width="0.7"/>
<line x1="1056.16" y1="301.2" x2="1056.16" y2="302.7" stroke="#909090" stroke-width="0.7"/>
<line x1="1062.3" y1="301.2" x2="1062.3" y2="304.2" stroke="#909090" stroke-width="0.7"/>
<line x1="1068.43" y1="301.2" x2="1068.43" y2="302.7" stroke="#909090" stroke-width="0.7"/>
<line x1="1074.56" y1="301.2" x2="1074.56" y2="302.7" stroke="#909090" stroke-width="0.7"/>
<line x1="1080.7" y1="301.2" x2="1080.7" y2="302.7" stroke="#909090" stroke-width="0.7"/>
<line x1="1086.83" y1="301.2" x2="1086.83" y2="304.2" stroke="#909090" stroke-width="0.7"/>
<line x1="1092.97" y1="301.2" x2="1092.97" y2="302.7" stroke="#909090" stroke-width="0.7"/>
<line x1="1099.1" y1="301.2" x2="1099.1" y2="302.7" stroke="#909090" stroke-width="0.7"/>
<line x1="1105.23" y1="301.2" x2="1105.23" y2="302.7" stroke="#909090" stroke-width="0.7"/>
<line x1="1111.37" y1="301.2" x2="1111.37" y2="304.2" stroke="#909090" stroke-width="0.7"/>
<line x1="1117.5" y1="301.2" x2="1117.5" y2="302.7" stroke="#909090" stroke-width="0.7"/>
<line x1="1123.64" y1="301.2" x2="1123.64" y2="302.7" stroke="#909090" stroke-width="0.7"/>
<line x1="1129.77" y1="301.2" x2="1129.77" y2="302.7" stroke="#909090" stroke-width="0.7"/>
<line x1="1135.9" y1="301.2" x2="1135.9" y2="304.2" stroke="#909090" stroke-width="0.7"/>
<line x1="1142.04" y1="301.2" x2="1142.04" y2="302.7" stroke="#909090" stroke-width="0.7"/>
<line x1="1148.17" y1="301.2" x2="1148.17" y2="302.7" stroke="#909090" stroke-width="0.7"/>
<line x1="1154.31" y1="301.2" x2="1154.31" y2="302.7" stroke="#909090" stroke-width="0.7"/>
<line x1="1160.44" y1="301.2" x2="1160.44" y2="304.2" stroke="#909090" stroke-width="0.7"/>
<line x1="1166.57" y1="301.2" x2="1166.57" y2="302.7" stroke="#909090" stroke-width="0.7"/>
<line x1="1172.71" y1="301.2" x2="1172.71" y2="302.7" stroke="#909090" stroke-width="0.7"/>
<line x1="1178.84" y1="301.2" x2="1178.84" y2="302.7" stroke="#909090" stroke-width="0.7"/>
<line x1="1184.98" y1="301.2" x2="1184.98" y2="304.2" stroke="#909090" stroke-width="0.7"/>
<line x1="1191.11" y1="301.2" x2="1191.11" y2="302.7" stroke="#909090" stroke-width="0.7"/>
<line x1="1197.24" y1="301.2" x2="1197.24" y2="302.7" stroke="#909090" stroke-width="0.7"/>
<line x1="1203.38" y1="301.2" x2="1203.38" y2="302.7" stroke="#909090" stroke-width="0.7"/>
<line x1="1209.51" y1="301.2" x2="1209.51" y2="304.2" stroke="#909090" stroke-width="0.7"/>
<line x1="1215.65" y1="301.2" x2="1215.65" y2="302.7" stroke="#909090" stroke-width="0.7"/>
<line x1="1221.78" y1="301.2" x2="1221.78" y2="302.7" stroke="#909090" stroke-width="0.7"/>
<line x1="1227.91" y1="301.2" x2="1227.91" y2="302.7" stroke="#909090" stroke-width="0.7"/>
<line x1="1234.05" y1="301.2" x2="1234.05" y2="304.2" stroke="#909090" stroke-width="0.7"/>
<line x1="1240.18" y1="301.2" x2="1240.18" y2="302.7" stroke="#909090" stroke-width="0.7"/>
<line x1="1246.32" y1="301.2" x2="1246.32" y2="302.7" stroke="#909090" stroke-width="0.7"/>
<line x1="1252.45" y1="301.2" x2="1252.45" y2="302.7" stroke="#909090" stroke-width="0.7"/>
<line x1="1258.58" y1="301.2" x2="1258.58" y2="304.2" stroke="#909090" stroke-width="0.7"/>
<line x1="1264.72" y1="301.2" x2="1264.72" y2="302.7" stroke="#909090" stroke-width="0.7"/>
<line x1="1270.85" y1="301.2" x2="1270.85" y2="302.7" stroke="#909090" stroke-width="0.7"/>
<line x1="1276.99" y1="301.2" x2="1276.99" y2="302.7" stroke="#909090" stroke-width="0.7"/>
<line x1="1283.12" y1="301.2" x2="1283.12" y2="304.2" stroke="#909090" stroke-width="0.7"/>
<line x1="1289.25" y1="301.2" x2="1289.25" y2="302.7" stroke="#909090" stroke-width="0.7"/>
<line x1="1295.39" y1="301.2" x2="1295.39" y2="302.7" stroke="#909090" stroke-width="0.7"/>
<line x1="1301.52" y1="301.2" x2="1301.52" y2="302.7" stroke="#909090" stroke-width="0.7"/>
<line x1="1307.66" y1="301.2" x2="1307.66" y2="304.2" stroke="#909090" stroke-width="0.7"/>
<line x1="1313.79" y1="301.2" x2="1313.79" y2="302.7" stroke="#909090" stroke-width="0.7"/>
<line x1="1319.92" y1="301.2" x2="1319.92" y2="302.7" stroke="#909090" stroke-width="0.7"/>
<line x1="1326.06" y1="301.2" x2="1326.06" y2="302.7" stroke="#909090" stroke-width="0.7"/>
<line x1="1332.19" y1="301.2" x2="1332.19" y2="304.2" stroke="#909090" stroke-width="0.7"/>
<line x1="1338.33" y1="301.2" x2="1338.33" y2="302.7" stroke="#909090" stroke-width="0.7"/>
<line x1="1344.46" y1="301.2" x2="1344.46" y2="302.7" stroke="#909090" stroke-width="0.7"/>
<line x1="1350.59" y1="301.2" x2="1350.59" y2="302.7" stroke="#909090" stroke-width="0.7"/>
<line x1="1356.73" y1="301.2" x2="1356.73" y2="304.2" stroke="#909090" stroke-width="0.7"/>
<line x1="1362.86" y1="301.2" x2="1362.86" y2="302.7" stroke="#909090" stroke-width="0.7"/>
<line x1="1369.0" y1="301.2" x2="1369.0" y2="302.7" stroke="#909090" stroke-width="0.7"/>
<line x1="1375.13" y1="301.2" x2="1375.13" y2="302.7" stroke="#909090" stroke-width="0.7"/>
<line x1="1381.26" y1="301.2" x2="1381.26" y2="304.2" stroke="#909090" stroke-width="0.7"/>
<line x1="1387.4" y1="301.2" x2="1387.4" y2="302.7" stroke="#909090" stroke-width="0.7"/>
<line x1="1393.53" y1="301.2" x2="1393.53" y2="302.7" stroke="#909090" stroke-width="0.7"/>
<line x1="1399.67" y1="301.2" x2="1399.67" y2="302.7" stroke="#909090" stroke-width="0.7"/>
<line x1="1405.8" y1="301.2" x2="1405.8" y2="304.2" stroke="#909090" stroke-width="0.7"/>
<text transform="translate(816.94 312.6) scale(1.0000 1)" font-size="7.2" fill="#202020" text-anchor="middle">8</text>
<text transform="translate(841.47 312.6) scale(1.0000 1)" font-size="7.2" fill="#202020" text-anchor="middle">16</text>
<text transform="translate(866.01 312.6) scale(1.0000 1)" font-size="7.2" fill="#202020" text-anchor="middle">24</text>
<text transform="translate(890.54 312.6) scale(1.0000 1)" font-size="7.2" fill="#202020" text-anchor="middle">32</text>
<text transform="translate(915.08 312.6) scale(1.0000 1)" font-size="7.2" fill="#202020" text-anchor="middle">40</text>
<text transform="translate(939.62 312.6) scale(1.0000 1)" font-size="7.2" fill="#202020" text-anchor="middle">48</text>
<text transform="translate(964.15 312.6) scale(1.0000 1)" font-size="7.2" fill="#202020" text-anchor="middle">56</text>
<text transform="translate(988.69 312.6) scale(1.0000 1)" font-size="7.2" fill="#202020" text-anchor="middle">64</text>
<text transform="translate(1013.22 312.6) scale(1.0000 1)" font-size="7.2" fill="#202020" text-anchor="middle">72</text>
<text transform="translate(1037.76 312.6) scale(1.0000 1)" font-size="7.2" fill="#202020" text-anchor="middle">80</text>
<text transform="translate(1062.3 312.6) scale(1.0000 1)" font-size="7.2" fill="#202020" text-anchor="middle">88</text>
<text transform="translate(1086.83 312.6) scale(1.0000 1)" font-size="7.2" fill="#202020" text-anchor="middle">96</text>
<text transform="translate(1111.37 312.6) scale(1.0000 1)" font-size="7.2" fill="#202020" text-anchor="middle">104</text>
<text transform="translate(1135.9 312.6) scale(1.0000 1)" font-size="7.2" fill="#202020" text-anchor="middle">112</text>
<text transform="translate(1160.44 312.6) scale(1.0000 1)" font-size="7.2" fill="#202020" text-anchor="middle">120</text>
<text transform="translate(1184.98 312.6) scale(1.0000 1)" font-size="7.2" fill="#202020" text-anchor="middle">128</text>
<text transform="translate(1209.51 312.6) scale(1.0000 1)" font-size="7.2" fill="#202020" text-anchor="middle">136</text>
<text transform="translate(1234.05 312.6) scale(1.0000 1)" font-size="7.2" fill="#202020" text-anchor="middle">144</text>
<text transform="translate(1258.58 312.6) scale(1.0000 1)" font-size="7.2" fill="#202020" text-anchor="middle">152</text>
<text transform="translate(1283.12 312.6) scale(1.0000 1)" font-size="7.2" fill="#202020" text-anchor="middle">160</text>
<text transform="translate(1307.66 312.6) scale(1.0000 1)" font-size="7.2" fill="#202020" text-anchor="middle">168</text>
<text transform="translate(1332.19 312.6) scale(1.0000 1)" font-size="7.2" fill="#202020" text-anchor="middle">176</text>
<text transform="translate(1356.73 312.6) scale(1.0000 1)" font-size="7.2" fill="#202020" text-anchor="middle">184</text>
<text transform="translate(1381.26 312.6) scale(1.0000 1)" font-size="7.2" fill="#202020" text-anchor="middle">192</text>
<text transform="translate(1405.8 312.6) scale(1.0000 1)" font-size="7.2" fill="#202020" text-anchor="middle">200</text>
<text transform="translate(786.3 285.55) scale(1.0000 1)" font-size="7.2" fill="#202020" text-anchor="end">0.02</text>
<line x1="788.8" y1="282.95" x2="791.8" y2="282.95" stroke="#909090" stroke-width="0.8"/>
<text transform="translate(786.3 268.4) scale(1.0000 1)" font-size="7.2" fill="#202020" text-anchor="end">0.04</text>
<line x1="788.8" y1="265.8" x2="791.8" y2="265.8" stroke="#909090" stroke-width="0.8"/>
<text transform="translate(786.3 251.25) scale(1.0000 1)" font-size="7.2" fill="#202020" text-anchor="end">0.06</text>
<line x1="788.8" y1="248.65" x2="791.8" y2="248.65" stroke="#909090" stroke-width="0.8"/>
<text transform="translate(786.3 234.1) scale(1.0000 1)" font-size="7.2" fill="#202020" text-anchor="end">0.08</text>
<line x1="788.8" y1="231.5" x2="791.8" y2="231.5" stroke="#909090" stroke-width="0.8"/>
<text transform="translate(786.3 216.95) scale(1.0000 1)" font-size="7.2" fill="#202020" text-anchor="end">0.1</text>
<line x1="788.8" y1="214.35" x2="791.8" y2="214.35" stroke="#909090" stroke-width="0.8"/>
<text transform="translate(786.3 199.8) scale(1.0000 1)" font-size="7.2" fill="#202020" text-anchor="end">0.12</text>
<line x1="788.8" y1="197.2" x2="791.8" y2="197.2" stroke="#909090" stroke-width="0.8"/>
<text transform="translate(786.3 182.65) scale(1.0000 1)" font-size="7.2" fill="#202020" text-anchor="end">0.14</text>
<line x1="788.8" y1="180.05" x2="791.8" y2="180.05" stroke="#909090" stroke-width="0.8"/>
<line x1="789.1999999999999" y1="295.81" x2="790.8" y2="295.81" stroke="#a0a0a0" stroke-width="0.6"/>
<line x1="789.1999999999999" y1="291.53" x2="790.8" y2="291.53" stroke="#a0a0a0" stroke-width="0.6"/>
<line x1="789.1999999999999" y1="287.24" x2="790.8" y2="287.24" stroke="#a0a0a0" stroke-width="0.6"/>
<line x1="789.1999999999999" y1="282.95" x2="790.8" y2="282.95" stroke="#a0a0a0" stroke-width="0.6"/>
<line x1="789.1999999999999" y1="278.66" x2="790.8" y2="278.66" stroke="#a0a0a0" stroke-width="0.6"/>
<line x1="789.1999999999999" y1="274.38" x2="790.8" y2="274.38" stroke="#a0a0a0" stroke-width="0.6"/>
<line x1="789.1999999999999" y1="270.09" x2="790.8" y2="270.09" stroke="#a0a0a0" stroke-width="0.6"/>
<line x1="789.1999999999999" y1="265.8" x2="790.8" y2="265.8" stroke="#a0a0a0" stroke-width="0.6"/>
<line x1="789.1999999999999" y1="261.51" x2="790.8" y2="261.51" stroke="#a0a0a0" stroke-width="0.6"/>
<line x1="789.1999999999999" y1="257.23" x2="790.8" y2="257.23" stroke="#a0a0a0" stroke-width="0.6"/>
<line x1="789.1999999999999" y1="252.94" x2="790.8" y2="252.94" stroke="#a0a0a0" stroke-width="0.6"/>
<line x1="789.1999999999999" y1="248.65" x2="790.8" y2="248.65" stroke="#a0a0a0" stroke-width="0.6"/>
<line x1="789.1999999999999" y1="244.36" x2="790.8" y2="244.36" stroke="#a0a0a0" stroke-width="0.6"/>
<line x1="789.1999999999999" y1="240.08" x2="790.8" y2="240.08" stroke="#a0a0a0" stroke-width="0.6"/>
<line x1="789.1999999999999" y1="235.79" x2="790.8" y2="235.79" stroke="#a0a0a0" stroke-width="0.6"/>
<line x1="789.1999999999999" y1="231.5" x2="790.8" y2="231.5" stroke="#a0a0a0" stroke-width="0.6"/>
<line x1="789.1999999999999" y1="227.21" x2="790.8" y2="227.21" stroke="#a0a0a0" stroke-width="0.6"/>
<line x1="789.1999999999999" y1="222.93" x2="790.8" y2="222.93" stroke="#a0a0a0" stroke-width="0.6"/>
<line x1="789.1999999999999" y1="218.64" x2="790.8" y2="218.64" stroke="#a0a0a0" stroke-width="0.6"/>
<line x1="789.1999999999999" y1="214.35" x2="790.8" y2="214.35" stroke="#a0a0a0" stroke-width="0.6"/>
<line x1="789.1999999999999" y1="210.06" x2="790.8" y2="210.06" stroke="#a0a0a0" stroke-width="0.6"/>
<line x1="789.1999999999999" y1="205.78" x2="790.8" y2="205.78" stroke="#a0a0a0" stroke-width="0.6"/>
<line x1="789.1999999999999" y1="201.49" x2="790.8" y2="201.49" stroke="#a0a0a0" stroke-width="0.6"/>
<line x1="789.1999999999999" y1="197.2" x2="790.8" y2="197.2" stroke="#a0a0a0" stroke-width="0.6"/>
<line x1="789.1999999999999" y1="192.91" x2="790.8" y2="192.91" stroke="#a0a0a0" stroke-width="0.6"/>
<line x1="789.1999999999999" y1="188.62" x2="790.8" y2="188.62" stroke="#a0a0a0" stroke-width="0.6"/>
<line x1="789.1999999999999" y1="184.34" x2="790.8" y2="184.34" stroke="#a0a0a0" stroke-width="0.6"/>
<line x1="789.1999999999999" y1="180.05" x2="790.8" y2="180.05" stroke="#a0a0a0" stroke-width="0.6"/>
<text transform="translate(1079 171.2) scale(1.0010 1)" font-size="7.4" fill="#2a2aff" text-anchor="middle">Cogging Magnitudes (Virtual Work)</text>
<text transform="translate(1102.5 321.6) scale(0.9895 1)" font-size="7.4" fill="#202020" text-anchor="middle">Harmonic order (Mechanical)</text>
<text transform="translate(750.3 237.4) rotate(-90) scale(0.9580 1)" font-size="7.4" fill="#202020" text-anchor="middle">Harmonic amplitude[Nm]</text>
<text transform="translate(819.2 199.2) scale(1.0151 1)" font-size="24.8" fill="#000000">23</text>
<text transform="translate(918.6 278.2) scale(1.0695 1)" font-size="24.8" fill="#000000">46</text>
<text transform="translate(988.5 252.3) scale(1.0587 1)" font-size="24.8" fill="#000000">69</text>
<text transform="translate(1058.5 290.8) scale(1.0333 1)" font-size="24.8" fill="#000000">92</text>
<line x1="816.94" y1="348.4" x2="816.94" y2="453.3" stroke="#cecece" stroke-width="1"/>
<line x1="841.47" y1="348.4" x2="841.47" y2="453.3" stroke="#cecece" stroke-width="1"/>
<line x1="866.01" y1="348.4" x2="866.01" y2="453.3" stroke="#cecece" stroke-width="1"/>
<line x1="890.54" y1="348.4" x2="890.54" y2="453.3" stroke="#cecece" stroke-width="1"/>
<line x1="915.08" y1="348.4" x2="915.08" y2="453.3" stroke="#cecece" stroke-width="1"/>
<line x1="939.62" y1="348.4" x2="939.62" y2="453.3" stroke="#cecece" stroke-width="1"/>
<line x1="964.15" y1="348.4" x2="964.15" y2="453.3" stroke="#cecece" stroke-width="1"/>
<line x1="988.69" y1="348.4" x2="988.69" y2="453.3" stroke="#cecece" stroke-width="1"/>
<line x1="1013.22" y1="348.4" x2="1013.22" y2="453.3" stroke="#cecece" stroke-width="1"/>
<line x1="1037.76" y1="348.4" x2="1037.76" y2="453.3" stroke="#cecece" stroke-width="1"/>
<line x1="1062.3" y1="348.4" x2="1062.3" y2="453.3" stroke="#cecece" stroke-width="1"/>
<line x1="1086.83" y1="348.4" x2="1086.83" y2="453.3" stroke="#cecece" stroke-width="1"/>
<line x1="1111.37" y1="348.4" x2="1111.37" y2="453.3" stroke="#cecece" stroke-width="1"/>
<line x1="1135.9" y1="348.4" x2="1135.9" y2="453.3" stroke="#cecece" stroke-width="1"/>
<line x1="1160.44" y1="348.4" x2="1160.44" y2="453.3" stroke="#cecece" stroke-width="1"/>
<line x1="1184.98" y1="348.4" x2="1184.98" y2="453.3" stroke="#cecece" stroke-width="1"/>
<line x1="1209.51" y1="348.4" x2="1209.51" y2="453.3" stroke="#cecece" stroke-width="1"/>
<line x1="1234.05" y1="348.4" x2="1234.05" y2="453.3" stroke="#cecece" stroke-width="1"/>
<line x1="1258.58" y1="348.4" x2="1258.58" y2="453.3" stroke="#cecece" stroke-width="1"/>
<line x1="1283.12" y1="348.4" x2="1283.12" y2="453.3" stroke="#cecece" stroke-width="1"/>
<line x1="1307.66" y1="348.4" x2="1307.66" y2="453.3" stroke="#cecece" stroke-width="1"/>
<line x1="1332.19" y1="348.4" x2="1332.19" y2="453.3" stroke="#cecece" stroke-width="1"/>
<line x1="1356.73" y1="348.4" x2="1356.73" y2="453.3" stroke="#cecece" stroke-width="1"/>
<line x1="1381.26" y1="348.4" x2="1381.26" y2="453.3" stroke="#cecece" stroke-width="1"/>
<line x1="1405.8" y1="348.4" x2="1405.8" y2="453.3" stroke="#cecece" stroke-width="1"/>
<line x1="791.8" y1="444.11" x2="1408.5" y2="444.11" stroke="#cecece" stroke-width="1"/>
<line x1="791.8" y1="430.04" x2="1408.5" y2="430.04" stroke="#cecece" stroke-width="1"/>
<line x1="791.8" y1="415.97" x2="1408.5" y2="415.97" stroke="#cecece" stroke-width="1"/>
<line x1="791.8" y1="401.9" x2="1408.5" y2="401.9" stroke="#cecece" stroke-width="1"/>
<line x1="791.8" y1="387.83" x2="1408.5" y2="387.83" stroke="#cecece" stroke-width="1"/>
<line x1="791.8" y1="373.76" x2="1408.5" y2="373.76" stroke="#cecece" stroke-width="1"/>
<line x1="791.8" y1="359.69" x2="1408.5" y2="359.69" stroke="#cecece" stroke-width="1"/>
<line x1="792.8" y1="401.9" x2="1408.5" y2="401.9" stroke="#f03030" stroke-width="0.9"/>
<rect x="931.98" y="350.69" width="3.0" height="51.21" fill="#ff0000" stroke="#700000" stroke-width="0.7"/>
<rect x="1002.52" y="401.9" width="3.0" height="0.7" fill="#ff2020" stroke="none" stroke-width="1"/>
<rect x="1073.06" y="379.19" width="3.0" height="22.71" fill="#ff0000" stroke="#700000" stroke-width="0.7"/>
<rect x="1143.61" y="401.9" width="3.0" height="41.65" fill="#ff0000" stroke="#700000" stroke-width="0.7"/>
<rect x="1214.15" y="401.9" width="3.0" height="48.68" fill="#ff0000" stroke="#700000" stroke-width="0.7"/>
<rect x="1284.69" y="401.9" width="3.0" height="46.71" fill="#ff0000" stroke="#700000" stroke-width="0.7"/>
<rect x="1355.23" y="368.41" width="3.0" height="33.49" fill="#ff0000" stroke="#700000" stroke-width="0.7"/>
<line x1="791.8" y1="348.4" x2="1408.5" y2="348.4" stroke="#303030" stroke-width="1"/>
<line x1="1408.5" y1="348.4" x2="1408.5" y2="453.3" stroke="#303030" stroke-width="1"/>
<line x1="791.8" y1="347.9" x2="791.8" y2="454.3" stroke="#101010" stroke-width="2"/>
<line x1="790.8" y1="453.3" x2="1409.0" y2="453.3" stroke="#101010" stroke-width="2"/>
<line x1="798.53" y1="454.3" x2="798.53" y2="455.8" stroke="#909090" stroke-width="0.7"/>
<line x1="804.67" y1="454.3" x2="804.67" y2="455.8" stroke="#909090" stroke-width="0.7"/>
<line x1="810.8" y1="454.3" x2="810.8" y2="455.8" stroke="#909090" stroke-width="0.7"/>
<line x1="816.94" y1="454.3" x2="816.94" y2="457.3" stroke="#909090" stroke-width="0.7"/>
<line x1="823.07" y1="454.3" x2="823.07" y2="455.8" stroke="#909090" stroke-width="0.7"/>
<line x1="829.2" y1="454.3" x2="829.2" y2="455.8" stroke="#909090" stroke-width="0.7"/>
<line x1="835.34" y1="454.3" x2="835.34" y2="455.8" stroke="#909090" stroke-width="0.7"/>
<line x1="841.47" y1="454.3" x2="841.47" y2="457.3" stroke="#909090" stroke-width="0.7"/>
<line x1="847.61" y1="454.3" x2="847.61" y2="455.8" stroke="#909090" stroke-width="0.7"/>
<line x1="853.74" y1="454.3" x2="853.74" y2="455.8" stroke="#909090" stroke-width="0.7"/>
<line x1="859.87" y1="454.3" x2="859.87" y2="455.8" stroke="#909090" stroke-width="0.7"/>
<line x1="866.01" y1="454.3" x2="866.01" y2="457.3" stroke="#909090" stroke-width="0.7"/>
<line x1="872.14" y1="454.3" x2="872.14" y2="455.8" stroke="#909090" stroke-width="0.7"/>
<line x1="878.28" y1="454.3" x2="878.28" y2="455.8" stroke="#909090" stroke-width="0.7"/>
<line x1="884.41" y1="454.3" x2="884.41" y2="455.8" stroke="#909090" stroke-width="0.7"/>
<line x1="890.54" y1="454.3" x2="890.54" y2="457.3" stroke="#909090" stroke-width="0.7"/>
<line x1="896.68" y1="454.3" x2="896.68" y2="455.8" stroke="#909090" stroke-width="0.7"/>
<line x1="902.81" y1="454.3" x2="902.81" y2="455.8" stroke="#909090" stroke-width="0.7"/>
<line x1="908.95" y1="454.3" x2="908.95" y2="455.8" stroke="#909090" stroke-width="0.7"/>
<line x1="915.08" y1="454.3" x2="915.08" y2="457.3" stroke="#909090" stroke-width="0.7"/>
<line x1="921.21" y1="454.3" x2="921.21" y2="455.8" stroke="#909090" stroke-width="0.7"/>
<line x1="927.35" y1="454.3" x2="927.35" y2="455.8" stroke="#909090" stroke-width="0.7"/>
<line x1="933.48" y1="454.3" x2="933.48" y2="455.8" stroke="#909090" stroke-width="0.7"/>
<line x1="939.62" y1="454.3" x2="939.62" y2="457.3" stroke="#909090" stroke-width="0.7"/>
<line x1="945.75" y1="454.3" x2="945.75" y2="455.8" stroke="#909090" stroke-width="0.7"/>
<line x1="951.88" y1="454.3" x2="951.88" y2="455.8" stroke="#909090" stroke-width="0.7"/>
<line x1="958.02" y1="454.3" x2="958.02" y2="455.8" stroke="#909090" stroke-width="0.7"/>
<line x1="964.15" y1="454.3" x2="964.15" y2="457.3" stroke="#909090" stroke-width="0.7"/>
<line x1="970.29" y1="454.3" x2="970.29" y2="455.8" stroke="#909090" stroke-width="0.7"/>
<line x1="976.42" y1="454.3" x2="976.42" y2="455.8" stroke="#909090" stroke-width="0.7"/>
<line x1="982.55" y1="454.3" x2="982.55" y2="455.8" stroke="#909090" stroke-width="0.7"/>
<line x1="988.69" y1="454.3" x2="988.69" y2="457.3" stroke="#909090" stroke-width="0.7"/>
<line x1="994.82" y1="454.3" x2="994.82" y2="455.8" stroke="#909090" stroke-width="0.7"/>
<line x1="1000.96" y1="454.3" x2="1000.96" y2="455.8" stroke="#909090" stroke-width="0.7"/>
<line x1="1007.09" y1="454.3" x2="1007.09" y2="455.8" stroke="#909090" stroke-width="0.7"/>
<line x1="1013.22" y1="454.3" x2="1013.22" y2="457.3" stroke="#909090" stroke-width="0.7"/>
<line x1="1019.36" y1="454.3" x2="1019.36" y2="455.8" stroke="#909090" stroke-width="0.7"/>
<line x1="1025.49" y1="454.3" x2="1025.49" y2="455.8" stroke="#909090" stroke-width="0.7"/>
<line x1="1031.63" y1="454.3" x2="1031.63" y2="455.8" stroke="#909090" stroke-width="0.7"/>
<line x1="1037.76" y1="454.3" x2="1037.76" y2="457.3" stroke="#909090" stroke-width="0.7"/>
<line x1="1043.89" y1="454.3" x2="1043.89" y2="455.8" stroke="#909090" stroke-width="0.7"/>
<line x1="1050.03" y1="454.3" x2="1050.03" y2="455.8" stroke="#909090" stroke-width="0.7"/>
<line x1="1056.16" y1="454.3" x2="1056.16" y2="455.8" stroke="#909090" stroke-width="0.7"/>
<line x1="1062.3" y1="454.3" x2="1062.3" y2="457.3" stroke="#909090" stroke-width="0.7"/>
<line x1="1068.43" y1="454.3" x2="1068.43" y2="455.8" stroke="#909090" stroke-width="0.7"/>
<line x1="1074.56" y1="454.3" x2="1074.56" y2="455.8" stroke="#909090" stroke-width="0.7"/>
<line x1="1080.7" y1="454.3" x2="1080.7" y2="455.8" stroke="#909090" stroke-width="0.7"/>
<line x1="1086.83" y1="454.3" x2="1086.83" y2="457.3" stroke="#909090" stroke-width="0.7"/>
<line x1="1092.97" y1="454.3" x2="1092.97" y2="455.8" stroke="#909090" stroke-width="0.7"/>
<line x1="1099.1" y1="454.3" x2="1099.1" y2="455.8" stroke="#909090" stroke-width="0.7"/>
<line x1="1105.23" y1="454.3" x2="1105.23" y2="455.8" stroke="#909090" stroke-width="0.7"/>
<line x1="1111.37" y1="454.3" x2="1111.37" y2="457.3" stroke="#909090" stroke-width="0.7"/>
<line x1="1117.5" y1="454.3" x2="1117.5" y2="455.8" stroke="#909090" stroke-width="0.7"/>
<line x1="1123.64" y1="454.3" x2="1123.64" y2="455.8" stroke="#909090" stroke-width="0.7"/>
<line x1="1129.77" y1="454.3" x2="1129.77" y2="455.8" stroke="#909090" stroke-width="0.7"/>
<line x1="1135.9" y1="454.3" x2="1135.9" y2="457.3" stroke="#909090" stroke-width="0.7"/>
<line x1="1142.04" y1="454.3" x2="1142.04" y2="455.8" stroke="#909090" stroke-width="0.7"/>
<line x1="1148.17" y1="454.3" x2="1148.17" y2="455.8" stroke="#909090" stroke-width="0.7"/>
<line x1="1154.31" y1="454.3" x2="1154.31" y2="455.8" stroke="#909090" stroke-width="0.7"/>
<line x1="1160.44" y1="454.3" x2="1160.44" y2="457.3" stroke="#909090" stroke-width="0.7"/>
<line x1="1166.57" y1="454.3" x2="1166.57" y2="455.8" stroke="#909090" stroke-width="0.7"/>
<line x1="1172.71" y1="454.3" x2="1172.71" y2="455.8" stroke="#909090" stroke-width="0.7"/>
<line x1="1178.84" y1="454.3" x2="1178.84" y2="455.8" stroke="#909090" stroke-width="0.7"/>
<line x1="1184.98" y1="454.3" x2="1184.98" y2="457.3" stroke="#909090" stroke-width="0.7"/>
<line x1="1191.11" y1="454.3" x2="1191.11" y2="455.8" stroke="#909090" stroke-width="0.7"/>
<line x1="1197.24" y1="454.3" x2="1197.24" y2="455.8" stroke="#909090" stroke-width="0.7"/>
<line x1="1203.38" y1="454.3" x2="1203.38" y2="455.8" stroke="#909090" stroke-width="0.7"/>
<line x1="1209.51" y1="454.3" x2="1209.51" y2="457.3" stroke="#909090" stroke-width="0.7"/>
<line x1="1215.65" y1="454.3" x2="1215.65" y2="455.8" stroke="#909090" stroke-width="0.7"/>
<line x1="1221.78" y1="454.3" x2="1221.78" y2="455.8" stroke="#909090" stroke-width="0.7"/>
<line x1="1227.91" y1="454.3" x2="1227.91" y2="455.8" stroke="#909090" stroke-width="0.7"/>
<line x1="1234.05" y1="454.3" x2="1234.05" y2="457.3" stroke="#909090" stroke-width="0.7"/>
<line x1="1240.18" y1="454.3" x2="1240.18" y2="455.8" stroke="#909090" stroke-width="0.7"/>
<line x1="1246.32" y1="454.3" x2="1246.32" y2="455.8" stroke="#909090" stroke-width="0.7"/>
<line x1="1252.45" y1="454.3" x2="1252.45" y2="455.8" stroke="#909090" stroke-width="0.7"/>
<line x1="1258.58" y1="454.3" x2="1258.58" y2="457.3" stroke="#909090" stroke-width="0.7"/>
<line x1="1264.72" y1="454.3" x2="1264.72" y2="455.8" stroke="#909090" stroke-width="0.7"/>
<line x1="1270.85" y1="454.3" x2="1270.85" y2="455.8" stroke="#909090" stroke-width="0.7"/>
<line x1="1276.99" y1="454.3" x2="1276.99" y2="455.8" stroke="#909090" stroke-width="0.7"/>
<line x1="1283.12" y1="454.3" x2="1283.12" y2="457.3" stroke="#909090" stroke-width="0.7"/>
<line x1="1289.25" y1="454.3" x2="1289.25" y2="455.8" stroke="#909090" stroke-width="0.7"/>
<line x1="1295.39" y1="454.3" x2="1295.39" y2="455.8" stroke="#909090" stroke-width="0.7"/>
<line x1="1301.52" y1="454.3" x2="1301.52" y2="455.8" stroke="#909090" stroke-width="0.7"/>
<line x1="1307.66" y1="454.3" x2="1307.66" y2="457.3" stroke="#909090" stroke-width="0.7"/>
<line x1="1313.79" y1="454.3" x2="1313.79" y2="455.8" stroke="#909090" stroke-width="0.7"/>
<line x1="1319.92" y1="454.3" x2="1319.92" y2="455.8" stroke="#909090" stroke-width="0.7"/>
<line x1="1326.06" y1="454.3" x2="1326.06" y2="455.8" stroke="#909090" stroke-width="0.7"/>
<line x1="1332.19" y1="454.3" x2="1332.19" y2="457.3" stroke="#909090" stroke-width="0.7"/>
<line x1="1338.33" y1="454.3" x2="1338.33" y2="455.8" stroke="#909090" stroke-width="0.7"/>
<line x1="1344.46" y1="454.3" x2="1344.46" y2="455.8" stroke="#909090" stroke-width="0.7"/>
<line x1="1350.59" y1="454.3" x2="1350.59" y2="455.8" stroke="#909090" stroke-width="0.7"/>
<line x1="1356.73" y1="454.3" x2="1356.73" y2="457.3" stroke="#909090" stroke-width="0.7"/>
<line x1="1362.86" y1="454.3" x2="1362.86" y2="455.8" stroke="#909090" stroke-width="0.7"/>
<line x1="1369.0" y1="454.3" x2="1369.0" y2="455.8" stroke="#909090" stroke-width="0.7"/>
<line x1="1375.13" y1="454.3" x2="1375.13" y2="455.8" stroke="#909090" stroke-width="0.7"/>
<line x1="1381.26" y1="454.3" x2="1381.26" y2="457.3" stroke="#909090" stroke-width="0.7"/>
<line x1="1387.4" y1="454.3" x2="1387.4" y2="455.8" stroke="#909090" stroke-width="0.7"/>
<line x1="1393.53" y1="454.3" x2="1393.53" y2="455.8" stroke="#909090" stroke-width="0.7"/>
<line x1="1399.67" y1="454.3" x2="1399.67" y2="455.8" stroke="#909090" stroke-width="0.7"/>
<line x1="1405.8" y1="454.3" x2="1405.8" y2="457.3" stroke="#909090" stroke-width="0.7"/>
<text transform="translate(816.94 465.4) scale(1.0000 1)" font-size="7.2" fill="#202020" text-anchor="middle">8</text>
<text transform="translate(841.47 465.4) scale(1.0000 1)" font-size="7.2" fill="#202020" text-anchor="middle">16</text>
<text transform="translate(866.01 465.4) scale(1.0000 1)" font-size="7.2" fill="#202020" text-anchor="middle">24</text>
<text transform="translate(890.54 465.4) scale(1.0000 1)" font-size="7.2" fill="#202020" text-anchor="middle">32</text>
<text transform="translate(915.08 465.4) scale(1.0000 1)" font-size="7.2" fill="#202020" text-anchor="middle">40</text>
<text transform="translate(939.62 465.4) scale(1.0000 1)" font-size="7.2" fill="#202020" text-anchor="middle">48</text>
<text transform="translate(964.15 465.4) scale(1.0000 1)" font-size="7.2" fill="#202020" text-anchor="middle">56</text>
<text transform="translate(988.69 465.4) scale(1.0000 1)" font-size="7.2" fill="#202020" text-anchor="middle">64</text>
<text transform="translate(1013.22 465.4) scale(1.0000 1)" font-size="7.2" fill="#202020" text-anchor="middle">72</text>
<text transform="translate(1037.76 465.4) scale(1.0000 1)" font-size="7.2" fill="#202020" text-anchor="middle">80</text>
<text transform="translate(1062.3 465.4) scale(1.0000 1)" font-size="7.2" fill="#202020" text-anchor="middle">88</text>
<text transform="translate(1086.83 465.4) scale(1.0000 1)" font-size="7.2" fill="#202020" text-anchor="middle">96</text>
<text transform="translate(1111.37 465.4) scale(1.0000 1)" font-size="7.2" fill="#202020" text-anchor="middle">104</text>
<text transform="translate(1135.9 465.4) scale(1.0000 1)" font-size="7.2" fill="#202020" text-anchor="middle">112</text>
<text transform="translate(1160.44 465.4) scale(1.0000 1)" font-size="7.2" fill="#202020" text-anchor="middle">120</text>
<text transform="translate(1184.98 465.4) scale(1.0000 1)" font-size="7.2" fill="#202020" text-anchor="middle">128</text>
<text transform="translate(1209.51 465.4) scale(1.0000 1)" font-size="7.2" fill="#202020" text-anchor="middle">136</text>
<text transform="translate(1234.05 465.4) scale(1.0000 1)" font-size="7.2" fill="#202020" text-anchor="middle">144</text>
<text transform="translate(1258.58 465.4) scale(1.0000 1)" font-size="7.2" fill="#202020" text-anchor="middle">152</text>
<text transform="translate(1283.12 465.4) scale(1.0000 1)" font-size="7.2" fill="#202020" text-anchor="middle">160</text>
<text transform="translate(1307.66 465.4) scale(1.0000 1)" font-size="7.2" fill="#202020" text-anchor="middle">168</text>
<text transform="translate(1332.19 465.4) scale(1.0000 1)" font-size="7.2" fill="#202020" text-anchor="middle">176</text>
<text transform="translate(1356.73 465.4) scale(1.0000 1)" font-size="7.2" fill="#202020" text-anchor="middle">184</text>
<text transform="translate(1381.26 465.4) scale(1.0000 1)" font-size="7.2" fill="#202020" text-anchor="middle">192</text>
<text transform="translate(1405.8 465.4) scale(1.0000 1)" font-size="7.2" fill="#202020" text-anchor="middle">200</text>
<text transform="translate(786.3 446.71) scale(1.0000 1)" font-size="7.2" fill="#202020" text-anchor="end">-150</text>
<line x1="788.8" y1="444.11" x2="791.8" y2="444.11" stroke="#909090" stroke-width="0.8"/>
<text transform="translate(786.3 432.64) scale(1.0000 1)" font-size="7.2" fill="#202020" text-anchor="end">-100</text>
<line x1="788.8" y1="430.04" x2="791.8" y2="430.04" stroke="#909090" stroke-width="0.8"/>
<text transform="translate(786.3 418.57) scale(1.0000 1)" font-size="7.2" fill="#202020" text-anchor="end">-50</text>
<line x1="788.8" y1="415.97" x2="791.8" y2="415.97" stroke="#909090" stroke-width="0.8"/>
<text transform="translate(786.3 404.5) scale(1.0000 1)" font-size="7.2" fill="#202020" text-anchor="end">0</text>
<line x1="788.8" y1="401.9" x2="791.8" y2="401.9" stroke="#909090" stroke-width="0.8"/>
<text transform="translate(786.3 390.43) scale(1.0000 1)" font-size="7.2" fill="#202020" text-anchor="end">50</text>
<line x1="788.8" y1="387.83" x2="791.8" y2="387.83" stroke="#909090" stroke-width="0.8"/>
<text transform="translate(786.3 376.36) scale(1.0000 1)" font-size="7.2" fill="#202020" text-anchor="end">100</text>
<line x1="788.8" y1="373.76" x2="791.8" y2="373.76" stroke="#909090" stroke-width="0.8"/>
<text transform="translate(786.3 362.29) scale(1.0000 1)" font-size="7.2" fill="#202020" text-anchor="end">150</text>
<line x1="788.8" y1="359.69" x2="791.8" y2="359.69" stroke="#909090" stroke-width="0.8"/>
<line x1="789.1999999999999" y1="452.55" x2="790.8" y2="452.55" stroke="#a0a0a0" stroke-width="0.6"/>
<line x1="789.1999999999999" y1="449.74" x2="790.8" y2="449.74" stroke="#a0a0a0" stroke-width="0.6"/>
<line x1="789.1999999999999" y1="446.92" x2="790.8" y2="446.92" stroke="#a0a0a0" stroke-width="0.6"/>
<line x1="789.1999999999999" y1="444.11" x2="790.8" y2="444.11" stroke="#a0a0a0" stroke-width="0.6"/>
<line x1="789.1999999999999" y1="441.3" x2="790.8" y2="441.3" stroke="#a0a0a0" stroke-width="0.6"/>
<line x1="789.1999999999999" y1="438.48" x2="790.8" y2="438.48" stroke="#a0a0a0" stroke-width="0.6"/>
<line x1="789.1999999999999" y1="435.67" x2="790.8" y2="435.67" stroke="#a0a0a0" stroke-width="0.6"/>
<line x1="789.1999999999999" y1="432.85" x2="790.8" y2="432.85" stroke="#a0a0a0" stroke-width="0.6"/>
<line x1="789.1999999999999" y1="430.04" x2="790.8" y2="430.04" stroke="#a0a0a0" stroke-width="0.6"/>
<line x1="789.1999999999999" y1="427.23" x2="790.8" y2="427.23" stroke="#a0a0a0" stroke-width="0.6"/>
<line x1="789.1999999999999" y1="424.41" x2="790.8" y2="424.41" stroke="#a0a0a0" stroke-width="0.6"/>
<line x1="789.1999999999999" y1="421.6" x2="790.8" y2="421.6" stroke="#a0a0a0" stroke-width="0.6"/>
<line x1="789.1999999999999" y1="418.78" x2="790.8" y2="418.78" stroke="#a0a0a0" stroke-width="0.6"/>
<line x1="789.1999999999999" y1="415.97" x2="790.8" y2="415.97" stroke="#a0a0a0" stroke-width="0.6"/>
<line x1="789.1999999999999" y1="413.16" x2="790.8" y2="413.16" stroke="#a0a0a0" stroke-width="0.6"/>
<line x1="789.1999999999999" y1="410.34" x2="790.8" y2="410.34" stroke="#a0a0a0" stroke-width="0.6"/>
<line x1="789.1999999999999" y1="407.53" x2="790.8" y2="407.53" stroke="#a0a0a0" stroke-width="0.6"/>
<line x1="789.1999999999999" y1="404.71" x2="790.8" y2="404.71" stroke="#a0a0a0" stroke-width="0.6"/>
<line x1="789.1999999999999" y1="401.9" x2="790.8" y2="401.9" stroke="#a0a0a0" stroke-width="0.6"/>
<line x1="789.1999999999999" y1="399.09" x2="790.8" y2="399.09" stroke="#a0a0a0" stroke-width="0.6"/>
<line x1="789.1999999999999" y1="396.27" x2="790.8" y2="396.27" stroke="#a0a0a0" stroke-width="0.6"/>
<line x1="789.1999999999999" y1="393.46" x2="790.8" y2="393.46" stroke="#a0a0a0" stroke-width="0.6"/>
<line x1="789.1999999999999" y1="390.64" x2="790.8" y2="390.64" stroke="#a0a0a0" stroke-width="0.6"/>
<line x1="789.1999999999999" y1="387.83" x2="790.8" y2="387.83" stroke="#a0a0a0" stroke-width="0.6"/>
<line x1="789.1999999999999" y1="385.02" x2="790.8" y2="385.02" stroke="#a0a0a0" stroke-width="0.6"/>
<line x1="789.1999999999999" y1="382.2" x2="790.8" y2="382.2" stroke="#a0a0a0" stroke-width="0.6"/>
<line x1="789.1999999999999" y1="379.39" x2="790.8" y2="379.39" stroke="#a0a0a0" stroke-width="0.6"/>
<line x1="789.1999999999999" y1="376.57" x2="790.8" y2="376.57" stroke="#a0a0a0" stroke-width="0.6"/>
<line x1="789.1999999999999" y1="373.76" x2="790.8" y2="373.76" stroke="#a0a0a0" stroke-width="0.6"/>
<line x1="789.1999999999999" y1="370.95" x2="790.8" y2="370.95" stroke="#a0a0a0" stroke-width="0.6"/>
<line x1="789.1999999999999" y1="368.13" x2="790.8" y2="368.13" stroke="#a0a0a0" stroke-width="0.6"/>
<line x1="789.1999999999999" y1="365.32" x2="790.8" y2="365.32" stroke="#a0a0a0" stroke-width="0.6"/>
<line x1="789.1999999999999" y1="362.5" x2="790.8" y2="362.5" stroke="#a0a0a0" stroke-width="0.6"/>
<line x1="789.1999999999999" y1="359.69" x2="790.8" y2="359.69" stroke="#a0a0a0" stroke-width="0.6"/>
<line x1="789.1999999999999" y1="356.88" x2="790.8" y2="356.88" stroke="#a0a0a0" stroke-width="0.6"/>
<line x1="789.1999999999999" y1="354.06" x2="790.8" y2="354.06" stroke="#a0a0a0" stroke-width="0.6"/>
<line x1="789.1999999999999" y1="351.25" x2="790.8" y2="351.25" stroke="#a0a0a0" stroke-width="0.6"/>
<text transform="translate(1078.4 343.4) scale(1.0031 1)" font-size="7.4" fill="#2a2aff" text-anchor="middle">Cogging Angles</text>
<text transform="translate(1102.5 474.2) scale(0.9895 1)" font-size="7.4" fill="#202020" text-anchor="middle">Harmonic order (Mechanical)</text>
<text transform="translate(750.3 399) rotate(-90) scale(0.9796 1)" font-size="7.4" fill="#202020" text-anchor="middle">Harmonic angle [degrees]</text>
</svg></body></html>
